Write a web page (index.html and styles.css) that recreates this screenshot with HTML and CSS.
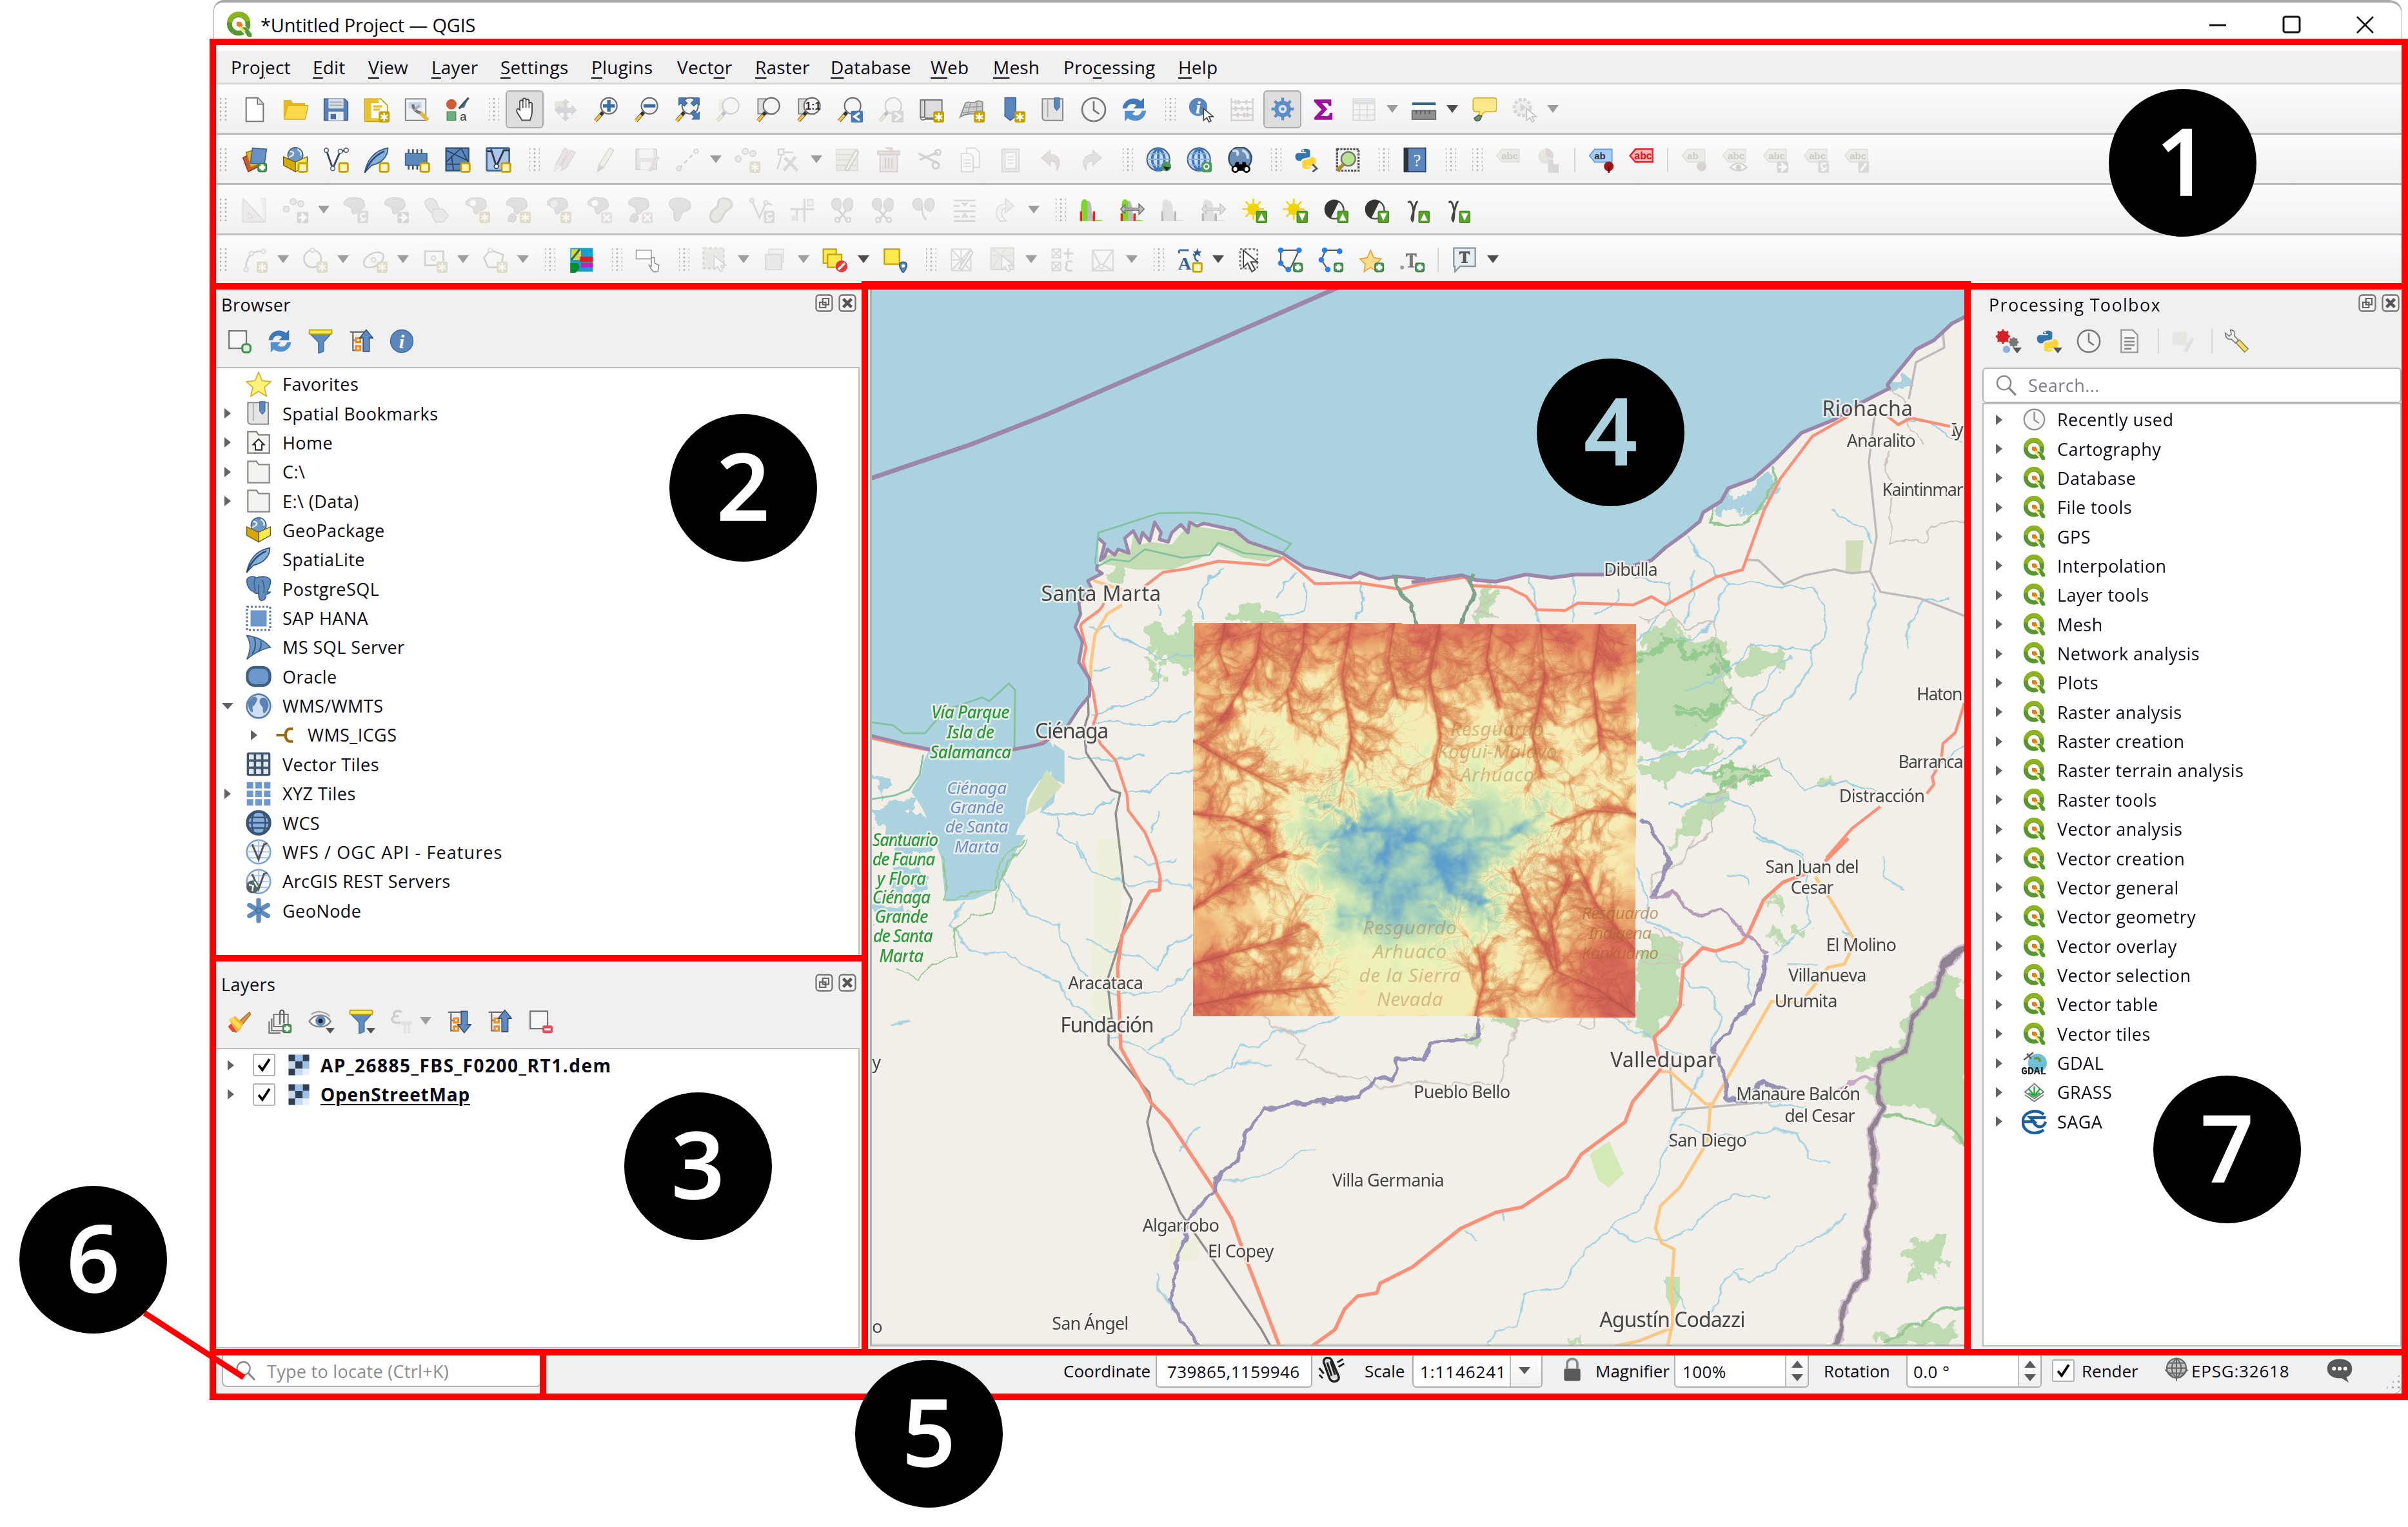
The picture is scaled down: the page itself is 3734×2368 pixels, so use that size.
FILE: index.html
```html
<!DOCTYPE html>
<html lang="en">
<head>
<meta charset="utf-8">
<title>*Untitled Project — QGIS</title>
<link rel="stylesheet" href="styles.css">
</head>
<body>
<svg class="sprite" aria-hidden="true">
<defs>
<!-- corner badges -->
<g id="b-star"><rect x="14" y="13.5" width="10" height="10.5" rx="1.6" fill="#c4a000"/><path d="M19 15v7.6M15.7 17l6.6 3.6M22.3 17l-6.6 3.6" stroke="#fff" stroke-width="1.5"/></g>
<g id="b-sq"><rect x="15" y="15" width="8" height="8" rx="1.2" fill="#fcf2b8" stroke="#c4a000" stroke-width="1.7"/></g>
<g id="b-plus"><rect x="15" y="15" width="8" height="8" rx="1.8" fill="#4e9a5a" stroke="#3d7d48"/><path d="M19 16.2v5.6M16.2 19h5.6" stroke="#fff" stroke-width="2.6"/></g>
<g id="b-x"><rect x="14" y="14" width="10" height="10" rx="1.5" fill="#e0a0a0"/><path d="M16 16l6 6M22 16l-6 6" stroke="#fff" stroke-width="1.8"/></g>
<g id="b-go"><rect x="13.5" y="13.5" width="10.5" height="10.5" rx="1.5" fill="#888"/><path d="M15 18.8h5M18.4 15.6l3.6 3.2-3.6 3.2z" stroke="#fff" stroke-width="1.8" fill="#fff"/></g>
<g id="b-rot"><rect x="14" y="12.5" width="10" height="11.5" rx="1.5" fill="#999"/><path d="M21.5 16c-3-2-6 1-4 3s3 2 4.500 0M16.500 21.500l4 0" stroke="#fff" stroke-width="1.6" fill="none"/></g>
<g id="b-up"><rect x="14" y="13" width="9.500" height="10.500" rx="1" fill="#5aa02c" stroke="#4a8a20"/><path d="M18.700 14.800l3.200 7h-6.400z" fill="#fff"/></g>
<g id="b-dn"><rect x="14" y="13" width="9.500" height="10.500" rx="1" fill="#5aa02c" stroke="#4a8a20"/><path d="M18.700 21.800l3.200-7h-6.400z" fill="#fff"/></g>
<g id="lens"><path d="M2 22.500l7-8" stroke="#333" stroke-width="3.400"/><path d="M1.800 22.600l5-5.600" stroke="#f5c242" stroke-width="2.600"/><circle cx="14.500" cy="8.500" r="7.500" fill="#f4f4f2" stroke="#6b6b6b" stroke-width="1.300"/></g>
<path id="blob" d="M2 4c3-5 9-4 14-3s6 8 2 10-4 1-5 3-3 2-4 0 1-3-2-5-7-1-5-5z" fill="#9fa79c" stroke="#84907f"/>
<path id="tagp" d="M1 11l5-6h16v12H6z"/>
<g id="ptr"><path d="M14 11l0 11 3-2.500 2 4 2-1-2-4h4z" fill="#fff" stroke="#444"/></g>
<!-- project and navigation -->
<symbol id="new" viewBox="0 0 24 24"><path d="M4 1h11l5 5.500V23H4z" fill="#fff" stroke="#777" stroke-width="1.200"/><path d="M14.500 1v6H20" fill="#ddd" stroke="#777"/></symbol>
<symbol id="open" viewBox="0 0 24 24"><path d="M1 3h7l2 3h11v4H5L1 20z" fill="#e8b923"/><path d="M5 8h19l-3 13H1.500z" fill="#fcd94b" stroke="#d8a91a" stroke-width=".8"/></symbol>
<symbol id="save" viewBox="0 0 24 24"><path d="M1 2h19l3 3v17H1z" fill="#5b80b2" stroke="#3e5f8a"/><path d="M5 2h14v9H5z" fill="#d9dde3"/><path d="M6 5h12M6 8h12" stroke="#9aa"/><path d="M5 14h14v8H5z" fill="#e8eef6"/><path d="M7 16h5v5H7z" fill="#4c6d99"/></symbol>
<symbol id="layout" viewBox="0 0 24 24"><path d="M1 2h15l6 6v15H1z" fill="#fff" stroke="#c4a000"/><path d="M1 2h6v21H1zM7 2h7v4H7zM7 20h7v3H7z" fill="#e6c232"/><path d="M9 9h8M9 12h6" stroke="#e6c232" stroke-width="2"/><use href="#b-star"/></symbol>
<symbol id="report" viewBox="0 0 24 24"><path d="M1 2h19v20H1z" fill="#eef2f7" stroke="#777"/><path d="M4 5h12v6H4z" fill="#c9d7e8"/><path d="M14 14l8 8" stroke="#e3bb3c" stroke-width="3.500"/><path d="M8 7c0 5 3 7 7 8" stroke="#777" stroke-width="2.600" fill="none"/><path d="M9 13l5-5" stroke="#aaa" stroke-width="2"/></symbol>
<symbol id="styles" viewBox="0 0 24 24"><circle cx="6" cy="7" r="4.800" fill="#cf5c36"/><path d="M22 1l-4 9-5 1z" fill="#4c77a8"/><path d="M22 1l-9 10" stroke="#456" stroke-width="2"/><rect x="2" y="14" width="8" height="8" fill="#6fae7f" stroke="#59936a"/><text x="14" y="22" font-size="11" font-family="Liberation Sans,sans-serif" fill="#333">a</text></symbol>
<symbol id="hand" viewBox="0 0 24 24"><path d="M7 13V5c0-2 3-2 3 0V3c0-2 3-2 3 0v1c0-2 3-2 3 0v3c0-2 3-1.500 3 0v8c0 3-1 5-2 8H9c-1-3-6-8-5-10s2-1 3 0z" fill="#fff" stroke="#444" stroke-width="1.200"/><path d="M10 5v6M13 4v7M16 6v5" stroke="#444"/></symbol>
<symbol id="pansel" viewBox="0 0 24 24"><path d="M2 4h9v9H2z" fill="#c4b870"/><path d="M12 2l4 4h-2.500v4h4V7.500l5 5-5 5V15h-4v4H16l-4 4-4-4h2.500v-4h-4v2.500l-5-5 5-5V10h4V6H8z" fill="#7b86a8"/></symbol>
<symbol id="zin" viewBox="0 0 24 24"><use href="#lens"/><path d="M14.500 3v11M9 8.500h11" stroke="#3a6ea5" stroke-width="3.200"/></symbol>
<symbol id="zout" viewBox="0 0 24 24"><use href="#lens"/><path d="M9 8.500h11" stroke="#3a6ea5" stroke-width="3.200"/></symbol>
<symbol id="zfull" viewBox="0 0 24 24"><use href="#lens"/><path d="M4 1h7l-2 2 3 3-3 3-3-3-2 2zM23 1h-7l2 2-3 3 3 3 3-3 2 2zM23 21h-7l2-2-3-4 3-3 3 4 2-2z" fill="#4a7ab5" stroke="#345d8c" stroke-width=".6"/></symbol>
<symbol id="zsel" viewBox="0 0 24 24"><path d="M3 2h13v12H3z" fill="#e0d9a0"/><use href="#lens"/></symbol>
<symbol id="zlay" viewBox="0 0 24 24"><path d="M2 2h15v14H2z" fill="#ddd" stroke="#777"/><use href="#lens"/></symbol>
<symbol id="znat" viewBox="0 0 24 24"><path d="M2 2h15v14H2z" fill="#ddd" stroke="#777"/><use href="#lens"/><text x="8.200" y="12" font-size="10" font-weight="700" font-family="Liberation Sans,sans-serif" fill="#222">1:1</text></symbol>
<symbol id="zlast" viewBox="0 0 24 24"><use href="#lens"/><rect x="13" y="13" width="11" height="11" rx="1" fill="#4a7ab5"/><path d="M21 15l-5 3.500 5 3.500" stroke="#fff" stroke-width="2" fill="none"/></symbol>
<symbol id="znext" viewBox="0 0 24 24"><use href="#lens"/><rect x="13" y="13" width="11" height="11" rx="1" fill="#889"/><path d="M16 15l5 3.500-5 3.500" stroke="#fff" stroke-width="2" fill="none"/></symbol>
<symbol id="map" viewBox="0 0 24 24"><path d="M2 3h4v16H2zM6 3h16v17H6" fill="#ddd" stroke="#777" stroke-width="1.200"/><path d="M2 19c0 3 3 3 4 2h15" fill="none" stroke="#777"/><use href="#b-star"/></symbol>
<symbol id="map3d" viewBox="0 0 24 24"><path d="M6 6c3-3 6 1 9-1s5-1 7 0v9c-4 0-6 2-9 2s-8 0-12 3z" fill="#ccc" stroke="#888"/><path d="M5 10l17-1M3 15l18-2M11 5l-3 12M17 5l-1 10" stroke="#999" stroke-width=".8"/><use href="#b-star"/></symbol>
<symbol id="bmnew" viewBox="0 0 24 24"><path d="M5 1h10v17l-5 4-5-4z" fill="#5b87bd" stroke="#3e679a"/><use href="#b-star"/></symbol>
<symbol id="bm" viewBox="0 0 24 24"><path d="M2 2h19v20H5c-2 0-3-1-3-3z" fill="#e4e4e4" stroke="#888" stroke-width="1.200"/><path d="M7 2v17" stroke="#aaa"/><path d="M13 1h5v9l-2.500 3L13 10z" fill="#5b87bd" stroke="#3e679a" stroke-width=".6"/></symbol>
<symbol id="clock" viewBox="0 0 24 24"><circle cx="12" cy="12" r="10.800" fill="#f4f4f2" stroke="#777" stroke-width="1.600"/><path d="M12 4v8.500l5 3.500" stroke="#777" stroke-width="1.600" fill="none"/></symbol>
<symbol id="refresh" viewBox="0 0 24 24"><path d="M1 11C2 2 12-1 18 4l3-3v10H11l3-3C10 5 6 7 5 11z" fill="#3f78bd"/><path d="M23 13C22 22 12 25 6 20l-3 3V13h10l-3 3c4 3 8 1 9-3z" fill="#5590cf"/></symbol>
<symbol id="info" viewBox="0 0 24 24"><circle cx="12" cy="12" r="11" fill="#5b87bd" stroke="#44709f"/><text x="12" y="19" text-anchor="middle" font-size="19" font-style="italic" font-weight="700" font-family="Liberation Serif,serif" fill="#fff">i</text></symbol>
<symbol id="ident" viewBox="0 0 24 24"><circle cx="9" cy="9.500" r="8.500" fill="#5b87bd"/><text x="9" y="15.500" text-anchor="middle" font-size="17" font-style="italic" font-weight="700" font-family="Liberation Serif,serif" fill="#fff">i</text><use href="#ptr"/></symbol>
<symbol id="abacus" viewBox="0 0 24 24"><path d="M2 1v22M22 1v22M2 5h20M2 11h20M2 17h20M2 22h20" stroke="#777" stroke-width="1.400"/><path d="M6 3v4M9 3v4M16 3v4M6 9v4M12 9v4M17 9v4M8 15v4M14 15v4M17 15v4" stroke="#a66" stroke-width="2"/></symbol>
<symbol id="gear" viewBox="0 0 24 24"><circle cx="12" cy="12" r="6" fill="none" stroke="#5f8dc8" stroke-width="4"/><path d="M12 1v22M1 12h22M4.200 4.200l15.600 15.600M19.800 4.200L4.200 19.800" stroke="#5f8dc8" stroke-width="2.800"/><circle cx="12" cy="12" r="4" fill="#dfe6f0"/><circle cx="12" cy="12" r="1.700" fill="#5f8dc8"/></symbol>
<symbol id="sigma" viewBox="0 0 24 24"><path d="M4 3h15v5h-1.500c-.5-2-1-2.500-4-2.500H9.500l5.500 6-6.500 7h6c3 0 3.500-1 4-3H20v5.500H4v-1.500L11 12 4 4.500z" fill="#a0109c" stroke="#a0109c"/></symbol>
<symbol id="table" viewBox="0 0 24 24"><path d="M2 2h20v20H2z" fill="#eee" stroke="#888"/><path d="M2 3h20v4H2z" fill="#8fa4c0"/><path d="M2 12h20M2 17h20M8 7v15M15 7v15" stroke="#999"/></symbol>
<symbol id="measure" viewBox="0 0 24 24"><path d="M1 6.500h22" stroke="#3b5f86" stroke-width="2.600"/><rect x="1" y="13" width="22" height="8" fill="#8f8f8f" stroke="#666"/><path d="M5 13v3M9 13v3M13 13v3M17 13v3" stroke="#555"/></symbol>
<symbol id="tip" viewBox="0 0 24 24"><path d="M5 1h16c2 0 3 1 3 3v7c0 2-1 3-3 3h-8l-6 6 1-6H5c-2 0-3-1-3-3V4c0-2 1-3 3-3z" fill="#fae98a" stroke="#d6b93a" stroke-width="1.200"/><path d="M3 20l4-3 3 1-2 4c-2 1-4 1-5-2z" fill="#5e9a57" stroke="#555"/></symbol>
<symbol id="gearptr" viewBox="0 0 24 24"><circle cx="10" cy="10" r="7.500" fill="#ddd" stroke="#888" stroke-width="3" stroke-dasharray="3 1.500"/><path d="M8 6l6 4-6 4z" fill="#888"/><use href="#ptr"/></symbol>
<!-- data sources and editing -->
<symbol id="dsm" viewBox="0 0 24 24"><path d="M1 10l8-4 5 13-8 4z" fill="#c45c3a" stroke="#94401f"/><path d="M4 5l10-3 3 14-9 3z" fill="#e6b422" stroke="#a87e10"/><path d="M10 1l13 1-2 14-13-1z" fill="#6591c4" stroke="#3d6899"/><use href="#b-plus"/></symbol>
<symbol id="gpkg" viewBox="0 0 24 24"><circle cx="12" cy="7.500" r="7" fill="#6f97c4" stroke="#3e5f86"/><path d="M7 4c2 0 4 1 3 3s-3 1-4 3M14 2c2 1 4 3 3 6" stroke="#dce8f5" stroke-width="1.500" fill="none"/><path d="M1 9l11 5v9L1 17z" fill="#d4a90e" stroke="#6e5a0c" stroke-width=".8"/><path d="M23 9l-11 5v9l11-6z" fill="#fbe94f" stroke="#6e5a0c" stroke-width=".8"/></symbol>
<symbol id="gpkgn" viewBox="0 0 24 24"><use href="#gpkg" width="24" height="24"/><use href="#b-sq"/></symbol>
<symbol id="shp" viewBox="0 0 24 24"><path d="M3 3l6 17L16 4l6 -1" stroke="#345" stroke-width="1.700" fill="none"/><g fill="#fff" stroke="#567"><circle cx="3" cy="3" r="2"/><circle cx="9" cy="20" r="2"/><circle cx="16" cy="4" r="2"/><circle cx="21.500" cy="3" r="2"/></g><use href="#b-sq"/></symbol>
<symbol id="feather" viewBox="0 0 24 24"><path d="M1 23.500C3 12 10 3 22.500 1c0 7-5 14-15 16z" fill="#86aedb" stroke="#2f5a88"/><path d="M1 24C4 16 10 8 19 4" stroke="#2c4a6e" stroke-width="1.500" fill="none"/></symbol>
<symbol id="feathern" viewBox="0 0 24 24"><use href="#feather" width="24" height="24"/><use href="#b-sq"/></symbol>
<symbol id="mem" viewBox="0 0 24 24"><rect x="1" y="6" width="20" height="11" fill="#5b87bd" stroke="#3e679a"/><path d="M4 2v4M8 2v4M12 2v4M16 2v4M4 17v4M8 17v4M12 17v4" stroke="#44556a" stroke-width="1.600"/><use href="#b-sq"/></symbol>
<symbol id="meshn" viewBox="0 0 24 24"><rect x="1" y="1" width="21" height="21" fill="#5b87bd" stroke="#2f4f76" stroke-width="1.400"/><path d="M1 14l14-13M1 3l21 10M8 22l-2-14M1 16h21M15 1l7 14" stroke="#24415f" fill="none"/><use href="#b-sq"/></symbol>
<symbol id="vtn" viewBox="0 0 24 24"><rect x="1" y="1" width="21" height="21" rx="1" fill="#a9c6e8" stroke="#3e679a" stroke-width="1.600"/><path d="M5 2l5 16L17 3h5M1 4h5" stroke="#334" stroke-width="1.700" fill="none"/><circle cx="10" cy="18" r="2" fill="#fff" stroke="#345"/><use href="#b-sq"/></symbol>
<symbol id="pens" viewBox="0 0 24 24"><path d="M2 22l1-6L11 1l4 2-8 15zM8 22l1-6 8-13 4 2-8 14z" fill="#dba8b8" stroke="#a88"/><path d="M2 22l1-6 4 2z" fill="#ddc"/></symbol>
<symbol id="pen" viewBox="0 0 24 24"><path d="M4 23l1.500-7L15 1l4 2-9.500 16z" fill="#e8dfa8" stroke="#888"/><path d="M4 23l1.500-7 4 3z" fill="#888"/></symbol>
<symbol id="savee" viewBox="0 0 24 24"><path d="M2 2h19v19H2z" fill="#bbb" stroke="#777"/><path d="M5 2h13v8H5zM6 14h10v7H6z" fill="#eee"/><path d="M13 22l8-14 3 2-8 13z" fill="#d99"/></symbol>
<symbol id="line" viewBox="0 0 24 24"><path d="M4 20L20 4" stroke="#777" stroke-dasharray="4 3" stroke-width="1.500"/><circle cx="4" cy="20" r="2.200" fill="#ccc" stroke="#888"/><circle cx="20" cy="4" r="2.200" fill="#ccc" stroke="#888"/></symbol>
<symbol id="pts" viewBox="0 0 24 24"><g fill="#ccc" stroke="#888" stroke-width="1.300"><circle cx="10" cy="4" r="2.700"/><circle cx="3.500" cy="11" r="2.700"/><circle cx="17" cy="6" r="2.700"/></g><use href="#b-star"/></symbol>
<symbol id="ptsm" viewBox="0 0 24 24"><g fill="#ccc" stroke="#888" stroke-width="1.300"><circle cx="10" cy="4" r="2.700"/><circle cx="3.500" cy="11" r="2.700"/><circle cx="17" cy="6" r="2.700"/></g><use href="#b-go"/></symbol>
<symbol id="vtx" viewBox="0 0 24 24"><path d="M3 2h5v5H3zM8 5h9M6 7l-4 14" stroke="#888" stroke-width="1.500" fill="none"/><path d="M8 22L19 9M9 10l12 12" stroke="#998" stroke-width="3"/></symbol>
<symbol id="multi" viewBox="0 0 24 24"><path d="M1 2h20v20H1z" fill="#d6d2b0" stroke="#aaa"/><path d="M1 7h20M1 12h20M1 17h20" stroke="#998"/><path d="M9 21L19 3l3 2-10 17z" fill="#ddc" stroke="#866"/></symbol>
<symbol id="trash" viewBox="0 0 24 24"><path d="M4 7h16v16H4z" fill="#e8b8b8" stroke="#a66"/><path d="M2 4h20v3H2zM9 1h6v3M9 10v10M12 10v10M15 10v10" fill="#d99" stroke="#a66" stroke-width="1.300"/></symbol>
<symbol id="cut" viewBox="0 0 24 24"><path d="M2 6l18 9M3 12l17-7" stroke="#777" stroke-width="2"/><circle cx="20" cy="5" r="2.500" fill="none" stroke="#777" stroke-width="1.800"/><circle cx="18" cy="17" r="3" fill="none" stroke="#777" stroke-width="1.800"/></symbol>
<symbol id="copy" viewBox="0 0 24 24"><path d="M9 1h8l4 4v14H9z" fill="#fff" stroke="#888"/><path d="M4 6h8l3 3v14H4z" fill="#fff" stroke="#888"/><path d="M6 12h7M6 15h7M6 18h7" stroke="#999"/></symbol>
<symbol id="paste" viewBox="0 0 24 24"><path d="M4 2h16v21H4z" fill="#ccb" stroke="#887"/><path d="M7 5h10v15H7z" fill="#fff" stroke="#999"/><path d="M9 9h6M9 12h6M9 15h6" stroke="#999"/></symbol>
<symbol id="undo" viewBox="0 0 24 24"><path d="M3 10l8-7v4c9 0 11 8 6 15 1-6-1-9-6-9v4z" fill="#b98" stroke="#a87"/></symbol>
<symbol id="redo" viewBox="0 0 24 24"><path d="M21 10l-8-7v4C4 7 2 15 7 22c-1-6 1-9 6-9v4z" fill="#9ab09a" stroke="#899"/></symbol>
<symbol id="globe" viewBox="0 0 24 24"><circle cx="12" cy="12" r="11" fill="#c9dcf0" stroke="#44668c" stroke-width="1.400"/><path d="M12 1v22M12 1C4 7 4 17 12 23M12 1c8 6 8 16 0 22" stroke="#3f78bd" stroke-width="2.400" fill="none"/><path d="M1 12h22M3 6.500h18M3 17.500h18" stroke="#8fb0d6" fill="none"/></symbol>
<symbol id="meta1" viewBox="0 0 24 24"><use href="#globe" width="23" height="23"/><circle cx="19" cy="18" r="4.500" fill="#4e9a5a"/><path d="M16 18l3 4 4-3z" fill="#222"/></symbol>
<symbol id="meta2" viewBox="0 0 24 24"><use href="#globe" width="23" height="23"/><rect x="14" y="14" width="9.500" height="9.500" rx="2" fill="#4e9a5a"/><circle cx="18.500" cy="18.200" r="2.200" fill="none" stroke="#fff" stroke-width="1.400"/></symbol>
<symbol id="world" viewBox="0 0 24 24"><circle cx="12" cy="12" r="11" fill="#cddff2" stroke="#5b80ab" stroke-width="1.600"/><path d="M6 4c4-2 6 1 4 4s-1 3-3 4 1 4-1 6c-3-2-5-8-3-11zM14 5c3-2 6 0 7 4s-1 8-4 10c-2-3 0-5-2-7s-3-5-1-7z" fill="#5b84b5"/></symbol>
<symbol id="binoc" viewBox="0 0 24 24"><circle cx="12" cy="10.500" r="10.500" fill="#6c8fb8" stroke="#33506f" stroke-width="1.500"/><path d="M5 4c4-2 6 1 4 4M14 3c3 1 6 4 5 8" stroke="#cfdded" stroke-width="2.400" fill="none"/><path d="M5 22l3-8h3v2h3v-2h3l3 8z" fill="#000"/><circle cx="7.500" cy="20.500" r="2.700" fill="#fff" stroke="#000" stroke-width="1.700"/><circle cx="18" cy="20.500" r="2.700" fill="#fff" stroke="#000" stroke-width="1.700"/></symbol>
<symbol id="python" viewBox="0 0 24 24"><path d="M7 4c0-3 9-3 9 0v5c0 3-8 1-9 5H4c-4-1-4-8 0-8h8V5H7z" fill="#3474a8"/><path d="M17 20c0 3-9 3-9 0v-5c0-3 8-1 9-5h2c4 1 4 8 0 9h-7v1z" fill="#ffd43b"/><circle cx="9" cy="3.600" r="1" fill="#fff"/></symbol>
<symbol id="pyc" viewBox="0 0 24 24"><use href="#python" width="22" height="22"/><path d="M17 16l4 4-4 3" stroke="#555" stroke-width="1.700" fill="none"/></symbol>
<symbol id="osmsearch" viewBox="0 0 24 24"><path d="M2 2h20v20H2z" fill="#f4f4f0" stroke="#555" stroke-width="2" stroke-dasharray="2 1"/><circle cx="12.500" cy="11" r="6.500" fill="#b9e38c" stroke="#777" stroke-width="1.500"/><path d="M2 22l6-6" stroke="#b58a2a" stroke-width="3.400"/></symbol>
<symbol id="help" viewBox="0 0 24 24"><path d="M2 1h20v22H2z" fill="#5b87bd" stroke="#2f3f52"/><path d="M2 1h4v22H2z" fill="#27323f"/><text x="14" y="18" text-anchor="middle" font-size="16" font-family="Liberation Serif,serif" fill="#fff">?</text></symbol>
<symbol id="tag" viewBox="0 0 24 24"><use href="#tagp" y="-3" fill="#cfcaa6" stroke="#a9a58a"/><text x="5.500" y="11.500" font-size="9" font-weight="700" font-family="Liberation Sans,sans-serif" fill="#555">abc</text></symbol>
<symbol id="diag" viewBox="0 0 24 24"><circle cx="9" cy="8.500" r="7" fill="#aac0a0"/><path d="M9 8.500V1a7.500 7.500 0 0 1 7 9z" fill="#b77"/><path d="M11 12h5v12h-5zM16 16h5v8h-5z" fill="#a88"/></symbol>
<symbol id="tagpin" viewBox="0 0 24 24"><use href="#tagp" y="-3" fill="#a9cdf6" stroke="#5e97dd"/><text x="5.500" y="11.500" font-size="9" font-weight="700" font-family="Liberation Sans,sans-serif" fill="#333">ab</text><circle cx="19" cy="18" r="4.500" fill="#a31515"/><path d="M19 18v6" stroke="#700" stroke-width="1.500"/></symbol>
<symbol id="tagred" viewBox="0 0 24 24"><use href="#tagp" y="-3" fill="#fbb" stroke="#e22" stroke-width="1.500"/><text x="5" y="11.500" font-size="9.500" font-weight="700" font-family="Liberation Sans,sans-serif" fill="#e01010">abc</text></symbol>
<symbol id="tagpin2" viewBox="0 0 24 24"><use href="#tagp" y="-3" fill="#d8d4ac" stroke="#a9a58a"/><text x="5.500" y="11.500" font-size="9" font-weight="700" font-family="Liberation Sans,sans-serif" fill="#555">ab</text><circle cx="19" cy="18" r="4.500" fill="#a77"/></symbol>
<symbol id="tageye" viewBox="0 0 24 24"><use href="#tagp" y="-3" fill="#d8d4ac" stroke="#a9a58a"/><text x="5.500" y="11.500" font-size="9" font-weight="700" font-family="Liberation Sans,sans-serif" fill="#555">abc</text><path d="M8 19c4-5 11-5 15 0-4 4-11 4-15 0z" fill="#fff" stroke="#777" stroke-width="1.400"/><circle cx="15.500" cy="19" r="2.500" fill="#777"/></symbol>
<symbol id="taggo" viewBox="0 0 24 24"><use href="#tagp" y="-3" fill="#d8d4ac" stroke="#a9a58a"/><text x="5.500" y="11.500" font-size="9" font-weight="700" font-family="Liberation Sans,sans-serif" fill="#555">abc</text><use href="#b-go"/></symbol>
<symbol id="tagrot" viewBox="0 0 24 24"><use href="#tagp" y="-3" fill="#d8d4ac" stroke="#a9a58a"/><text x="5.500" y="11.500" font-size="9" font-weight="700" font-family="Liberation Sans,sans-serif" fill="#555">abc</text><use href="#b-rot"/></symbol>
<symbol id="taged" viewBox="0 0 24 24"><use href="#tagp" y="-3" fill="#d8d4ac" stroke="#a9a58a"/><text x="5.500" y="11.500" font-size="9" font-weight="700" font-family="Liberation Sans,sans-serif" fill="#555">abc</text><rect x="13.500" y="13" width="10" height="11" rx="1.500" fill="#998"/><path d="M16 22l5-7" stroke="#fff" stroke-width="2"/></symbol>
<!-- advanced digitizing -->
<symbol id="tri" viewBox="0 0 24 24"><path d="M1 1v22h21z" fill="#e8ccc8" stroke="#a99"/><path d="M6 14v5h4z" fill="#fff" stroke="#a99"/><path d="M17 1h5v22" fill="#e0dccb" stroke="#bbb"/></symbol>
<symbol id="a1" viewBox="0 0 24 24"><use href="#blob"/><use href="#b-rot"/></symbol>
<symbol id="a2" viewBox="0 0 24 24"><use href="#blob"/><use href="#b-go"/></symbol>
<symbol id="a3" viewBox="0 0 24 24"><path d="M2 3c3-3 8-3 10 2s3 6 0 9-6 0-8-3-4-6-2-8z" fill="#b4bcb2" stroke="#84907f"/><path d="M9 11h9l5 6-5 6h-7l-3-6z" fill="#c8cdd6" stroke="#8a93a3"/></symbol>
<symbol id="a4" viewBox="0 0 24 24"><use href="#blob"/><circle cx="8" cy="5.500" r="3" fill="#fff"/><use href="#b-star"/></symbol>
<symbol id="a5" viewBox="0 0 24 24"><use href="#blob"/><path d="M3 22c0-6 4-8 6-6s2 5-1 7z" fill="#9fa79c" stroke="#84907f"/><use href="#b-star"/></symbol>
<symbol id="a6" viewBox="0 0 24 24"><use href="#blob"/><circle cx="8" cy="6" r="4" fill="#cfd4cc" stroke="#999"/><use href="#b-star"/></symbol>
<symbol id="a7" viewBox="0 0 24 24"><use href="#blob"/><circle cx="8" cy="5.500" r="3" fill="#fff"/><use href="#b-x"/></symbol>
<symbol id="a8" viewBox="0 0 24 24"><use href="#blob"/><path d="M3 22c0-6 4-8 6-6s2 5-1 7z" fill="#9fa79c" stroke="#84907f"/><use href="#b-x"/></symbol>
<symbol id="a9" viewBox="0 0 24 24"><path d="M2 4c3-5 14-4 18 0s0 9-4 9-3 9-7 9-3-7-3-9-6-4-4-9z" fill="#a6aea0" stroke="#84907f"/></symbol>
<symbol id="a10" viewBox="0 0 24 24"><path d="M11 2c4-2 10-1 11 4s-5 5-7 9-3 8-8 8-6-5-4-9 5-3 6-6 0-5 2-6z" fill="#c9c5a8" stroke="#84907f" stroke-width="2"/></symbol>
<symbol id="a11" viewBox="0 0 24 24"><path d="M3 3l7 16L16 5l6 2" stroke="#888" stroke-width="1.600" fill="none"/><circle cx="3" cy="3" r="2" fill="#ccc" stroke="#888"/><circle cx="16" cy="5" r="2" fill="#ccc" stroke="#888"/><use href="#b-rot"/></symbol>
<symbol id="a12" viewBox="0 0 24 24"><path d="M1 11h22M14 1v22M7 12v10" stroke="#998" stroke-width="2"/><rect x="17" y="2" width="5" height="6" fill="#ddc" stroke="#998"/><rect x="2" y="17" width="5" height="5" fill="#dbb"/></symbol>
<symbol id="a13" viewBox="0 0 24 24"><path d="M2 4c2-4 7-4 8 0s0 8-3 8-7-4-5-8zM13 4c2-4 7-4 8 0s-1 9-4 9-6-5-4-9z" fill="#9fa79c" stroke="#84907f"/><path d="M8 12l8 9M15 12l-7 9" stroke="#877" stroke-width="1.600"/><circle cx="7" cy="21" r="2.200" fill="none" stroke="#a88" stroke-width="1.500"/><circle cx="17" cy="21" r="2.200" fill="none" stroke="#a88" stroke-width="1.500"/></symbol>
<symbol id="a14" viewBox="0 0 24 24"><path d="M2 4c2-4 7-4 8 0s0 8-3 8-7-4-5-8zM13 4c2-4 7-4 8 0s-1 9-4 9-6-5-4-9z" fill="#9fa79c" stroke="#84907f"/><path d="M10 9c0 6 1 9 4 12" stroke="#877" stroke-width="1.600" fill="none"/></symbol>
<symbol id="a15" viewBox="0 0 24 24"><path d="M2 3h20M2 8h5M17 8h5M2 13h20M2 18h5M17 18h5M2 22h20" stroke="#888" stroke-width="1.600"/><path d="M9 5l3 3 3-3M9 19l3-4 3 4" fill="#aaa" stroke="#888"/></symbol>
<symbol id="a16" viewBox="0 0 24 24"><path d="M12 1l8 7-8 6z" fill="#ccc" stroke="#999"/><path d="M12 6C3 7 1 16 7 22h6C7 17 7 11 12 10" fill="#eee" stroke="#999"/></symbol>
<!-- raster stretch -->
<symbol id="hist" viewBox="0 0 24 24"><path d="M2 22V8c0-5 2-7 4-6s4 5 4 10l5 9h5l3 1z" fill="#7ed62d"/><path d="M8 22V3c3 0 4 5 4 11l3 8z" fill="#bbb"/><path d="M2 22v-9M14 22v-9" stroke="#e22" stroke-width="2"/></symbol>
<symbol id="histm" viewBox="0 0 24 24"><path d="M2 22V8c0-5 2-7 4-6s4 5 4 10l5 9h5l3 1z" fill="#7ed62d"/><path d="M8 22V3c3 0 4 5 4 11l3 8z" fill="#bbb"/><path d="M2 22v-7M14 22v-7" stroke="#e22" stroke-width="2"/><path d="M1 11l4-4v3h13V6l5 5-5 5v-4H5v3z" fill="#bbb" stroke="#666" stroke-width=".8"/></symbol>
<symbol id="sunu" viewBox="0 0 24 24"><circle cx="11" cy="11" r="5.500" fill="#f2d500"/><path d="M11 1v20M1 11h20M4 4l14 14M18 4L4 18" stroke="#f2d500" stroke-width="1.500"/><use href="#b-up"/></symbol>
<symbol id="sund" viewBox="0 0 24 24"><circle cx="11" cy="11" r="5.500" fill="#f2d500"/><path d="M11 1v20M1 11h20M4 4l14 14M18 4L4 18" stroke="#f2d500" stroke-width="1.500"/><use href="#b-dn"/></symbol>
<symbol id="conu" viewBox="0 0 24 24"><circle cx="11" cy="11.500" r="8.500" fill="#eee" stroke="#555" stroke-width="1.500"/><path d="M14 4L7 18A7.500 7.500 0 0 1 14 4z" fill="#333" stroke="#333" stroke-width="2"/><use href="#b-up"/></symbol>
<symbol id="cond" viewBox="0 0 24 24"><circle cx="11" cy="11.500" r="8.500" fill="#eee" stroke="#555" stroke-width="1.500"/><path d="M14 4L7 18A7.500 7.500 0 0 1 14 4z" fill="#333" stroke="#333" stroke-width="2"/><use href="#b-dn"/></symbol>
<symbol id="gamu" viewBox="0 0 24 24"><path d="M4 5c2-3 4 1 5 8 0 4 0 7-1 9-2-2 0-6 1-9 2-6 2-9 4-9" stroke="#444" stroke-width="1.800" fill="none"/><use href="#b-up"/></symbol>
<symbol id="gamd" viewBox="0 0 24 24"><path d="M4 5c2-3 4 1 5 8 0 4 0 7-1 9-2-2 0-6 1-9 2-6 2-9 4-9" stroke="#444" stroke-width="1.800" fill="none"/><use href="#b-dn"/></symbol>
<!-- shapes, selection, mesh and annotation -->
<symbol id="arc" viewBox="0 0 24 24"><path d="M4 21C3 10 9 3 20 4" stroke="#777" stroke-width="1.600" fill="none"/><circle cx="4" cy="21" r="2" fill="#eee" stroke="#888"/><circle cx="9" cy="6" r="2" fill="#eee" stroke="#888"/><circle cx="20" cy="4" r="2" fill="#eee" stroke="#888"/><use href="#b-star"/></symbol>
<symbol id="circ" viewBox="0 0 24 24"><circle cx="10" cy="11" r="8" stroke="#777" stroke-width="1.600" fill="none"/><circle cx="10" cy="3" r="2" fill="#eee" stroke="#888"/><use href="#b-star"/></symbol>
<symbol id="ell" viewBox="0 0 24 24"><ellipse cx="11" cy="12" rx="10" ry="6" transform="rotate(-30 11 12)" stroke="#777" stroke-width="1.600" fill="none"/><circle cx="11" cy="12" r="2" fill="#eee" stroke="#888"/><use href="#b-star"/></symbol>
<symbol id="rct" viewBox="0 0 24 24"><rect x="3" y="4" width="17" height="13" stroke="#777" stroke-width="1.600" fill="none"/><circle cx="11" cy="10.500" r="2" fill="#eee" stroke="#888"/><use href="#b-star"/></symbol>
<symbol id="poly" viewBox="0 0 24 24"><path d="M8 3l12 4-2 12H6l-4-9z" stroke="#777" stroke-width="1.600" fill="none"/><circle cx="8" cy="3" r="2" fill="#eee" stroke="#888"/><use href="#b-star"/></symbol>
<symbol id="georef" viewBox="0 0 24 24"><rect x="2" y="1" width="21" height="22" fill="#159fd0"/><path d="M3 2h9v10H3z" fill="#e3cf4a"/><path d="M3 12l8-10" stroke="#274" stroke-width="2"/><path d="M11 9h12v5H11z" fill="#d22"/><path d="M12 15h11v4H12z" fill="#c020c0"/><path d="M2 15h7l2 4-4 5H2z" fill="#0a8a2a"/></symbol>
<symbol id="selrect" viewBox="0 0 24 24"><path d="M1 3h14v8H1z" fill="#fff" stroke="#888"/><path d="M15 10v8l-2-1c1 3 2 4 4 6h4l1-6-4-2v-5z" fill="#fff" stroke="#777"/></symbol>
<symbol id="selfeat" viewBox="0 0 24 24"><rect x="1" y="1" width="19" height="19" fill="#c9c9a8" stroke="#888" stroke-dasharray="3 2" stroke-width="1.500"/><path d="M11 8v13l3-3 3 5 2-1-2-5h5z" fill="#fff" stroke="#888"/></symbol>
<symbol id="selval" viewBox="0 0 24 24"><path d="M6 2h14v12H6z" fill="#ddd" stroke="#999"/><path d="M3 7h15v14H3z" fill="#c9c9b8" stroke="#888"/></symbol>
<symbol id="desel" viewBox="0 0 24 24"><path d="M1 2h12v13H1z" fill="#fce94f" stroke="#c4a000" stroke-width="1.300"/><path d="M5 7h13v12H5z" fill="#fce94f" stroke="#c4a000" stroke-width="1.300"/><circle cx="18" cy="18" r="5.500" fill="#e23b3b"/><path d="M15 21l6-6" stroke="#fff" stroke-width="2"/></symbol>
<symbol id="selloc" viewBox="0 0 24 24"><path d="M2 2h14v14H2z" fill="#fce94f" stroke="#c4a000" stroke-width="1.300"/><path d="M19.500 24c-5-6-4-10 0-10s5 4 0 10z" fill="#5d84ac" stroke="#3d5f80"/><circle cx="19.500" cy="17.500" r="1.500" fill="#fff"/></symbol>
<symbol id="m1" viewBox="0 0 24 24"><path d="M2 2h18v20H2zM2 12h18M2 22L20 2M11 2v20M2 2l18 20" stroke="#999" fill="none" stroke-width="1.300"/><path d="M9 20L20 3l2 2-10 16z" fill="#eee" stroke="#866"/></symbol>
<symbol id="m2" viewBox="0 0 24 24"><path d="M1 1h21v20H1z" fill="#cfd0b8" stroke="#999" stroke-width="1.300"/><path d="M1 8h21M1 21L15 1M1 1l20 14" stroke="#aaa"/><path d="M11 8v13l3-3 3 5 2-1-2-5h5z" fill="#fff" stroke="#888"/></symbol>
<symbol id="m3" viewBox="0 0 24 24"><path d="M2 2h8v8H2zM2 2l8 8M10 2l-8 8M2 14h8v8H2zM2 14l8 8M10 14l-8 8" stroke="#888" fill="none"/><path d="M17 1v10M13 6h9M21 14c-4-2-7 0-5 3-3 2-1 6 5 5" stroke="#888" stroke-width="1.700" fill="none"/></symbol>
<symbol id="m4" viewBox="0 0 24 24"><path d="M2 3h19v19H2zM2 3l8 16L21 3M2 22l8-6 11 6" stroke="#999" fill="none" stroke-width="1.500"/><circle cx="10" cy="18" r="2" fill="#eee" stroke="#999"/></symbol>
<symbol id="ann" viewBox="0 0 24 24"><path d="M2 3h9M2 3v3M15 7c3 0 0 6 5 6" stroke="#44709f" stroke-width="1.800" fill="none"/><text x="1" y="21" font-size="17" font-weight="700" font-family="Liberation Serif,serif" fill="#2f5f96">A</text><path d="M19 1l1 3h3l-2 2 1 3-3-2-3 2 1-3-2-2h3z" fill="#2f5f96"/><use href="#b-sq"/></symbol>
<symbol id="annsel" viewBox="0 0 24 24"><rect x="3" y="2" width="16" height="18" fill="none" stroke="#777" stroke-dasharray="2 2" stroke-width="1.600"/><path d="M6 3v16l4-4 4 8 3-2-4-7h6z" fill="#fff" stroke="#444" stroke-width="1.200"/></symbol>
<symbol id="npoly" viewBox="0 0 24 24"><path d="M3 3h17l-7 15-3 4L3 15z" stroke="#555" stroke-width="1.300" fill="none"/><g fill="#2a7ff0"><circle cx="3" cy="3" r="2.600"/><circle cx="20" cy="3" r="2.600"/><circle cx="3" cy="15" r="2.600"/><circle cx="10" cy="21" r="2.600"/></g><use href="#b-plus"/></symbol>
<symbol id="nline" viewBox="0 0 24 24"><path d="M19 3H7l-4 9 6 9" stroke="#555" stroke-width="1.300" fill="none"/><g fill="#2a7ff0"><circle cx="6" cy="3" r="2.600"/><circle cx="20" cy="4" r="2.600"/><circle cx="3" cy="12" r="2.600"/><circle cx="9" cy="21" r="2.600"/></g><use href="#b-plus"/></symbol>
<symbol id="nstar" viewBox="0 0 24 24"><path d="M11 3l3 7 7 1-5 5 1 7-6-4-6 4 1-7-5-5 7-1z" fill="#f9dd8e" stroke="#e0a63a"/><use href="#b-plus"/></symbol>
<symbol id="ntext" viewBox="0 0 24 24"><path d="M6 6h10v3h-1c0-1-1-1.500-2.500-1.500V18h1.500v1H8v-1h1.500V7.500C8 7.500 7 8 7 9H6z" fill="#777"/><circle cx="2.500" cy="19" r="1.800" fill="#999"/><use href="#b-plus"/></symbol>
<symbol id="tbal" viewBox="0 0 24 24"><path d="M2 1h20v17H8l-5 5V18H2z" fill="#e6eef3" stroke="#8a98a3" stroke-width="1.400"/><path d="M7 4h10v3h-1c0-1-1-1.500-2.500-1.500V14H15v1H9v-1h1.500V5.500C9 5.500 8 6 8 7H7z" fill="#555"/></symbol>
<!-- tree and panel icons -->
<symbol id="qgis" viewBox="0 0 24 24"><circle cx="11.500" cy="11.500" r="8.600" fill="none" stroke="#589632" stroke-width="4.600"/><path d="M3 10a8.600 8.600 0 0 1 17-1" fill="none" stroke="#8db41f" stroke-width="4.600"/><path d="M12 12h4.500l7 8v3.500h-4L12 16z" fill="#fff"/><path d="M14.500 14.500h4l5 6v3h-3.500z" fill="#589632"/><path d="M9.500 9.500h4l2 3.500-2 2-4-2z" fill="#ee7913"/><path d="M13 13l5 5-1.500 1.500-4-4z" fill="#f0e64a"/></symbol>
<symbol id="star" viewBox="0 0 24 24"><path d="M12 .8l3.400 7.900 8.100.8-6.100 5.300 1.900 8.200L12 18.600 4.700 23l1.900-8.200L.5 9.500l8.100-.8z" fill="#fdf37a" stroke="#d2b52c" stroke-width="1.100"/></symbol>
<symbol id="home" viewBox="0 0 24 24"><path d="M2 2h8l2 3h10v17H2z" fill="#f3f3f1" stroke="#7d7d7a" stroke-width="1.300"/><path d="M7 14l5-5 5 5h-2v5H9v-5z" fill="#fff" stroke="#333" stroke-width="1.300"/></symbol>
<symbol id="fold" viewBox="0 0 24 24"><path d="M2 2h8l2 3h10v17H2z" fill="#f3f3f1" stroke="#8a8a87" stroke-width="1.300"/></symbol>
<symbol id="pg" viewBox="0 0 24 24"><path d="M1 4c1-4 7-4 9-2 4-2 11-2 13 2 1 4-2 8-3 11h3c-1 2-3 2-4 2 0 3-1 6-4 6s-3-4-3-7c-3 1-4 0-5-2-2 1-6-4-6-10z" fill="#5f8bbf" stroke="#3f5f82"/><path d="M9 2C7 6 8 10 9 14M15 4c3 3 2 9 2 12M12 8v8" stroke="#3f5f82" fill="none"/></symbol>
<symbol id="hana" viewBox="0 0 24 24"><rect x="4.500" y="4.500" width="15" height="15" fill="#6c98cb"/><rect x="1.200" y="1.200" width="21.600" height="21.600" fill="none" stroke="#5c7590" stroke-width="1.800" stroke-dasharray="1.800 1.800"/></symbol>
<symbol id="mssql" viewBox="0 0 24 24"><path d="M1 1c9 1 17 5 22 11-6 1-15 5-22 11C5 14 5 8 1 1z" fill="#6c98cb" stroke="#44617f"/><path d="M8 3c2 6 1 11-2 15M14 6c1 4 0 7-2 10" stroke="#33506f" fill="none"/></symbol>
<symbol id="ora" viewBox="0 0 24 24"><rect x="1.500" y="3.500" width="21" height="17" rx="7" fill="#6c98cb" stroke="#3f5f82" stroke-width="2.600"/></symbol>
<symbol id="conn" viewBox="0 0 24 24"><path d="M3 12h9M20 5.500h-3c-6 0-6 13 0 13h3" stroke="#a0640f" stroke-width="2.800" fill="none"/></symbol>
<symbol id="vt" viewBox="0 0 24 24"><rect x="1" y="1" width="22" height="22" rx="2" fill="#3f566e"/><path d="M3 3h4.500v4.500H3zM9.700 3h4.500v4.500H9.700zM16.500 3H21v4.500h-4.500zM3 9.700h4.500v4.500H3zM9.700 9.700h4.500v4.500H9.700zM16.500 9.700H21v4.500h-4.500zM3 16.500h4.500V21H3zM9.700 16.500h4.500V21H9.700zM16.500 16.500H21V21h-4.500z" fill="#e2e9f0"/></symbol>
<symbol id="xyz" viewBox="0 0 24 24"><path d="M1 1h6v6H1zM9 1h6v6H9zM17 1h6v6h-6zM1 9h6v6H1zM9 9h6v6H9zM17 9h6v6h-6zM1 17h6v6H1zM9 17h6v6H9zM17 17h6v6h-6z" fill="#6c98cb"/></symbol>
<symbol id="wcs" viewBox="0 0 24 24"><circle cx="12" cy="12" r="10.500" fill="#86aede" stroke="#3a5674" stroke-width="2.600"/><path d="M1 12h22M3 7h18M3 17h18M8 2C5 8 5 16 8 22M16 2c3 6 3 14 0 20" stroke="#3a5674" stroke-width="1.500" fill="none"/></symbol>
<symbol id="wfs" viewBox="0 0 24 24"><circle cx="12" cy="12" r="11" fill="#f2f7fc" stroke="#7ba0cc" stroke-width="1.500"/><path d="M12 1v22M1 12h22M3 6.500h18M3 17.500h18" stroke="#a9c3e2"/><path d="M6 5l6 14 5-14 3-1" stroke="#555" stroke-width="1.800" fill="none"/></symbol>
<symbol id="arc2" viewBox="0 0 24 24"><circle cx="12" cy="12" r="11" fill="#f2f7fc" stroke="#7ba0cc" stroke-width="1.500"/><path d="M12 1v22M1 12h22M3 6.500h18M3 17.500h18" stroke="#a9c3e2"/><path d="M6 5l6 14 5-14 3-1" stroke="#555" stroke-width="1.800" fill="none"/><circle cx="6.500" cy="17" r="6" fill="#566"/><path d="M3 15l4 1-1 5M8 12l3 5" stroke="#eee" stroke-width="1.500" fill="none"/></symbol>
<symbol id="gnode" viewBox="0 0 24 24"><g stroke="#5f8bbf" stroke-width="4.400" stroke-linecap="round"><path d="M12 2.500v19M3.500 7l17 10M20.500 7l-17 10"/></g><circle cx="12" cy="12" r="2.500" fill="#5f8bbf" stroke="#3f6594" stroke-width=".8"/></symbol>
<symbol id="rast" viewBox="0 0 24 24"><path d="M1 1h22v22H1z" fill="#e8f0fa"/><path d="M1 1h7v7H1zM16 1h7v7h-7zM8 8h8v8H8zM1 16h7v7H1z" fill="#2f3f52"/><path d="M8 1h8v7H8zM16 8h7v8h-7z" fill="#9cc0ec"/><path d="M1 8h7v8H1zM8 16h8v7H8z" fill="#c3d9f2"/></symbol>
<symbol id="addl" viewBox="0 0 24 24"><path d="M2 2h17v17H2z" fill="#f6f6f4" stroke="#777" stroke-width="1.400"/><rect x="15" y="15" width="8" height="8" rx="3" fill="#dff0df" stroke="#3f9150" stroke-width="2"/></symbol>
<symbol id="reml" viewBox="0 0 24 24"><path d="M2 2h17v17H2z" fill="#f6f6f4" stroke="#777" stroke-width="1.400"/><rect x="14" y="16" width="10" height="7.500" rx="2" fill="#e8475c"/><path d="M16 19.800h6" stroke="#fff" stroke-width="2"/></symbol>
<symbol id="filter" viewBox="0 0 24 24"><path d="M1 4h22l-8 9v9l-5 2V13z" fill="#5f8bbf" stroke="#44709f"/><path d="M1 1h22v4H1z" fill="#fce94f" stroke="#c4a000"/></symbol>
<symbol id="coll" viewBox="0 0 24 24"><path d="M1 3h14M4 3v18h5M4 11h5" stroke="#777" stroke-width="1.500" fill="none"/><path d="M7 9h4v4H7zM7 17h4v4H7z" fill="#fff" stroke="#f08a1c" stroke-width="2"/><path d="M17 1l6.500 8H20v13h-6V9h-3.500z" fill="#5f8bbf" stroke="#2f4f76"/></symbol>
<symbol id="expn" viewBox="0 0 24 24"><path d="M1 3h14M4 3v18h5M4 11h5" stroke="#777" stroke-width="1.500" fill="none"/><path d="M7 9h4v4H7zM7 17h4v4H7z" fill="#fff" stroke="#f08a1c" stroke-width="2"/><path d="M17 23l6.500-8H20V2h-6v13h-3.500z" fill="#5f8bbf" stroke="#2f4f76"/></symbol>
<symbol id="brush" viewBox="0 0 24 24"><path d="M22 3l1 2-8 10-3-3z" fill="#d89a3a" stroke="#a56d1a"/><path d="M2 10l6-3 8 7-3 6-4 3z" fill="#f4b23a"/><path d="M2 10l4-2 8 8-2 4z" fill="#f6e04a"/><path d="M4 14l6 9-5-1-4-5z" fill="#e5483a"/></symbol>
<symbol id="group" viewBox="0 0 24 24"><path d="M6 5h14v12H6z" fill="#eee" stroke="#777" stroke-width="1.300"/><path d="M4 9v12h12M1.500 12v11.500h11" stroke="#777" stroke-width="1.400" fill="none"/><path d="M12 15V4c0-4 4-4 4 0v10" stroke="#666" stroke-width="1.500" fill="none"/><use href="#b-plus"/></symbol>
<symbol id="eye" viewBox="0 0 24 24"><path d="M1 12c5-8 16-8 21 0-5 7-16 7-21 0z" fill="#fff" stroke="#888" stroke-width="1.600"/><path d="M3 5c6-4 13-3 18 2" stroke="#aaa" fill="none" stroke-width="1.500"/><circle cx="12" cy="11.500" r="5" fill="#5f8bbf"/><circle cx="12" cy="11.500" r="2.200" fill="#223"/></symbol>
<symbol id="eps" viewBox="0 0 24 24"><path d="M12 3C7 0 3 3 5 7c-4 1-4 8 6 6M5 7h4" stroke="#777" stroke-width="2.200" fill="none"/><path d="M12 12h10v4l-2-1v9h-2v-8h-2v8h-2v-9l-2 1z" fill="#bbb"/></symbol>
<symbol id="gears" viewBox="0 0 24 24"><circle cx="7.500" cy="7.500" r="4" fill="none" stroke="#d2232a" stroke-width="3.600"/><path d="M7.500 .5v14M.5 7.500h14M2.500 2.500l10 10M12.500 2.500l-10 10" stroke="#d2232a" stroke-width="2"/><circle cx="18" cy="13" r="3" fill="none" stroke="#777" stroke-width="2.400"/><path d="M18 8v10M13 13h10M14.500 9.500l7 7M21.500 9.500l-7 7" stroke="#777" stroke-width="1.400"/><circle cx="11" cy="20" r="3.600" fill="#8fb0e0"/></symbol>
<symbol id="doc" viewBox="0 0 24 24"><path d="M4 1h11l5 5v17H4z" fill="#f6f6f4" stroke="#999" stroke-width="1.500"/><path d="M7 9h10M7 12.500h10M7 16h10M7 19.500h7" stroke="#888" stroke-width="1.600"/></symbol>
<symbol id="edb" viewBox="0 0 24 24"><path d="M2 3h14v13H2z" fill="#ccc9b0"/><path d="M12 22l8-14 3 2-7 13z" fill="#bbb"/></symbol>
<symbol id="wrench" viewBox="0 0 24 24"><path d="M13 12l9 9.500" stroke="#8a7a2a" stroke-width="5.500"/><path d="M13.500 12.500l8 8.500" stroke="#f2dc72" stroke-width="3.600"/><path d="M1 4l4 3 2-2-1-4c4 0 5 3 4 6l4 4-3 3-4-4C3 11 1 8 1 4z" fill="#eee" stroke="#777"/></symbol>
<symbol id="srch" viewBox="0 0 24 24"><circle cx="9.500" cy="9" r="7.500" fill="none" stroke="#888" stroke-width="1.700"/><path d="M15 14.500l7.500 8" stroke="#888" stroke-width="2.400"/></symbol>
<symbol id="gdal" viewBox="0 0 24 24"><circle cx="15" cy="12" r="9" fill="#6fc0d8"/><path d="M12 8c3-2 6 0 5 3" stroke="#6a9a3a" stroke-width="2.500" fill="none"/><path d="M2 9l9-7M5 3l4 5" stroke="#555" stroke-width="1.500"/><text x="-.5" y="22.500" font-size="10" font-weight="700" font-family="Liberation Mono,monospace" textLength="24" fill="#111">GDAL</text></symbol>
<symbol id="grass" viewBox="0 0 24 24"><path d="M2 12l10-9 10 9-10 7zM2 15l10 7 10-7" fill="#f7f7f4" stroke="#777" stroke-width="1.200"/><path d="M12 17V6M12 17C10 12 7 11 6 8M12 17c2-5 5-6 6-9M12 17c-3-3-5-3-6-4M12 17c3-3 5-3 6-4" stroke="#2fa84a" stroke-width="1.700" fill="none"/></symbol>
<symbol id="saga" viewBox="0 0 24 24"><path d="M21 5C13-1 1 3 1 12s10 14 20 8M1 12h11l-4-4h15M23 12c-3 7-9 6-12 0" stroke="#1c5f9f" stroke-width="2.700" fill="none"/></symbol>
<symbol id="undock" viewBox="0 0 24 24"><rect x="1.300" y="1.300" width="21.400" height="21.400" rx="4" fill="#f4f4f4" stroke="#777" stroke-width="2"/><path d="M10 6h8v8h-8zM6 11h8v7H6z" fill="#f4f4f4" stroke="#666" stroke-width="1.900"/></symbol>
<symbol id="close" viewBox="0 0 24 24"><rect x="1.300" y="1.300" width="21.400" height="21.400" rx="4" fill="#f4f4f4" stroke="#777" stroke-width="2"/><path d="M6.500 6.500l11 11M17.500 6.500l-11 11" stroke="#555" stroke-width="4"/></symbol>
<symbol id="tick" viewBox="0 0 24 24"><path d="M5.500 12.500l4.500 5.500L18.500 5" stroke="#000" stroke-width="3" fill="none"/></symbol>
<symbol id="foot" viewBox="0 0 24 24"><path d="M5 5l5 14c2 5 10 3 8-2L12 3c-2-4-8-2-7 2z" fill="#ddd" stroke="#222" stroke-width="2"/><path d="M8 5l4 12M11 4l4 12M1 10l4 5M1 16l3 3M17 5l5-3M18 9l5-3" stroke="#222" stroke-width="1.800"/></symbol>
<symbol id="lock" viewBox="0 0 24 24"><path d="M7 11V6c0-6 10-6 10 0v5" fill="none" stroke="#8a8a8a" stroke-width="2.400"/><rect x="4" y="11" width="16" height="12" rx="1.500" fill="#5a5a5a"/></symbol>
<symbol id="crs" viewBox="0 0 24 24"><circle cx="12" cy="10.500" r="9.500" fill="#c4c4c4" stroke="#6a6a6a" stroke-width="1.400"/><path d="M12 1v22M2 10.500h20M4 5.500h16M4 15.500h16M12 1c-6 5-6 14 0 19M12 1c6 5 6 14 0 19" stroke="#666" stroke-width="1.300" fill="none"/><path d="M1 12l8 8M23 12l-8 8" stroke="#666" stroke-width="1.500"/></symbol>
<symbol id="msg" viewBox="0 0 24 24"><path d="M12 2c7 0 11 3.500 11 8.500 0 4-2 6.500-5 7.500l2 5-6-4C6 19.500 1 16 1 10.500 1 5.500 5 2 12 2z" fill="#585858"/><circle cx="7" cy="10.500" r="1.700" fill="#fff"/><circle cx="12" cy="10.500" r="1.700" fill="#fff"/><circle cx="17" cy="10.500" r="1.700" fill="#fff"/></symbol>
</defs>
</svg>

<main class="window">
  <header class="titlebar">
    <svg class="logo"><use href="#qgis"/></svg><span>*Untitled Project — QGIS</span>
    <svg class="wbtns" viewBox="0 0 260 40"><path d="M4 21h26" stroke="#111" stroke-width="3"/><rect x="119" y="8" width="25" height="24" rx="3" fill="none" stroke="#111" stroke-width="3"/><path d="M233 8l25 25M258 8l-25 25" stroke="#111" stroke-width="2.600"/></svg>
  </header>
  <nav class="menu"><span>Pro<u>j</u>ect</span><span><u>E</u>dit</span><span><u>V</u>iew</span><span><u>L</u>ayer</span><span><u>S</u>ettings</span><span><u>P</u>lugins</span><span>Vect<u>o</u>r</span><span><u>R</u>aster</span><span><u>D</u>atabase</span><span><u>W</u>eb</span><span><u>M</u>esh</span><span>Pro<u>c</u>essing</span><span><u>H</u>elp</span></nav>
  <div class="tb"><i class="h"></i><svg><use href="#new"/></svg><svg><use href="#open"/></svg><svg><use href="#save"/></svg><svg><use href="#layout"/></svg><svg><use href="#report"/></svg><svg><use href="#styles"/></svg><i class="h"></i><span class="on"><svg><use href="#hand"/></svg></span><svg class="off"><use href="#pansel"/></svg><svg><use href="#zin"/></svg><svg><use href="#zout"/></svg><svg><use href="#zfull"/></svg><svg class="off"><use href="#zsel"/></svg><svg><use href="#zlay"/></svg><svg><use href="#znat"/></svg><svg><use href="#zlast"/></svg><svg class="off"><use href="#znext"/></svg><svg><use href="#map"/></svg><svg><use href="#map3d"/></svg><svg><use href="#bmnew"/></svg><svg><use href="#bm"/></svg><svg><use href="#clock"/></svg><svg><use href="#refresh"/></svg><i class="h"></i><svg><use href="#ident"/></svg><svg class="off"><use href="#abacus"/></svg><span class="on"><svg><use href="#gear"/></svg></span><svg><use href="#sigma"/></svg><svg class="off"><use href="#table"/></svg><i class="d"></i><svg><use href="#measure"/></svg><i class="d k"></i><svg><use href="#tip"/></svg><svg class="off"><use href="#gearptr"/></svg><i class="d"></i></div>
  <div class="tb"><i class="h"></i><svg><use href="#dsm"/></svg><svg><use href="#gpkgn"/></svg><svg><use href="#shp"/></svg><svg><use href="#feathern"/></svg><svg><use href="#mem"/></svg><svg><use href="#meshn"/></svg><svg><use href="#vtn"/></svg><i class="h"></i><svg class="off"><use href="#pens"/></svg><svg class="off"><use href="#pen"/></svg><svg class="off"><use href="#savee"/></svg><svg class="off"><use href="#line"/></svg><i class="d"></i><svg class="off"><use href="#pts"/></svg><svg class="off"><use href="#vtx"/></svg><i class="d"></i><svg class="off"><use href="#multi"/></svg><svg class="off"><use href="#trash"/></svg><svg class="off"><use href="#cut"/></svg><svg class="off"><use href="#copy"/></svg><svg class="off"><use href="#paste"/></svg><svg class="off"><use href="#undo"/></svg><svg class="off"><use href="#redo"/></svg><i class="h"></i><svg><use href="#meta1"/></svg><svg><use href="#meta2"/></svg><svg><use href="#binoc"/></svg><i class="h"></i><svg><use href="#pyc"/></svg><svg><use href="#osmsearch"/></svg><i class="h"></i><svg><use href="#help"/></svg><i class="h"></i><i class="h"></i><svg class="off"><use href="#tag"/></svg><svg class="off"><use href="#diag"/></svg><i class="s"></i><svg><use href="#tagpin"/></svg><svg><use href="#tagred"/></svg><i class="s"></i><svg class="off"><use href="#tagpin2"/></svg><svg class="off"><use href="#tageye"/></svg><svg class="off"><use href="#taggo"/></svg><svg class="off"><use href="#tagrot"/></svg><svg class="off"><use href="#taged"/></svg></div>
  <div class="tb"><i class="h"></i><svg class="off"><use href="#tri"/></svg><svg class="off"><use href="#ptsm"/></svg><i class="d"></i><svg class="off"><use href="#a1"/></svg><svg class="off"><use href="#a2"/></svg><svg class="off"><use href="#a3"/></svg><svg class="off"><use href="#a4"/></svg><svg class="off"><use href="#a5"/></svg><svg class="off"><use href="#a6"/></svg><svg class="off"><use href="#a7"/></svg><svg class="off"><use href="#a8"/></svg><svg class="off"><use href="#a9"/></svg><svg class="off"><use href="#a10"/></svg><svg class="off"><use href="#a11"/></svg><svg class="off"><use href="#a12"/></svg><svg class="off"><use href="#a13"/></svg><svg class="off"><use href="#a13"/></svg><svg class="off"><use href="#a14"/></svg><svg class="off"><use href="#a15"/></svg><svg class="off"><use href="#a16"/></svg><i class="d"></i><i class="h"></i><svg><use href="#hist"/></svg><svg><use href="#histm"/></svg><svg class="off gray"><use href="#hist"/></svg><svg class="off gray"><use href="#histm"/></svg><svg><use href="#sunu"/></svg><svg><use href="#sund"/></svg><svg><use href="#conu"/></svg><svg><use href="#cond"/></svg><svg><use href="#gamu"/></svg><svg><use href="#gamd"/></svg></div>
  <div class="tb"><i class="h"></i><svg class="off"><use href="#arc"/></svg><i class="d"></i><svg class="off"><use href="#circ"/></svg><i class="d"></i><svg class="off"><use href="#ell"/></svg><i class="d"></i><svg class="off"><use href="#rct"/></svg><i class="d"></i><svg class="off"><use href="#poly"/></svg><i class="d"></i><i class="h"></i><svg><use href="#georef"/></svg><i class="h"></i><svg class="half"><use href="#selrect"/></svg><i class="h"></i><svg class="off"><use href="#selfeat"/></svg><i class="d"></i><svg class="off"><use href="#selval"/></svg><i class="d"></i><svg><use href="#desel"/></svg><i class="d k"></i><svg><use href="#selloc"/></svg><i class="h"></i><svg class="off"><use href="#m1"/></svg><svg class="off"><use href="#m2"/></svg><i class="d"></i><svg class="off"><use href="#m3"/></svg><svg class="off"><use href="#m4"/></svg><i class="d"></i><i class="h"></i><svg><use href="#ann"/></svg><i class="d k"></i><svg><use href="#annsel"/></svg><svg><use href="#npoly"/></svg><svg><use href="#nline"/></svg><svg><use href="#nstar"/></svg><svg><use href="#ntext"/></svg><i class="s"></i><svg><use href="#tbal"/></svg><i class="d k"></i></div>

  <div class="body">
    <aside class="left">
      <section class="dock browser">
        <h2>Browser<svg><use href="#undock"/></svg><svg><use href="#close"/></svg></h2>
        <div class="tools"><svg><use href="#addl"/></svg><svg><use href="#refresh"/></svg><svg><use href="#filter"/></svg><svg><use href="#coll"/></svg><svg><use href="#info"/></svg></div>
        <ul class="tree">
          <li><b></b><svg><use href="#star"/></svg>Favorites</li>
          <li><b class="a"></b><svg><use href="#bm"/></svg>Spatial Bookmarks</li>
          <li><b class="a"></b><svg><use href="#home"/></svg>Home</li>
          <li><b class="a"></b><svg><use href="#fold"/></svg>C:\</li>
          <li><b class="a"></b><svg><use href="#fold"/></svg>E:\ (Data)</li>
          <li><b></b><svg><use href="#gpkg"/></svg>GeoPackage</li>
          <li><b></b><svg><use href="#feather"/></svg>SpatiaLite</li>
          <li><b></b><svg><use href="#pg"/></svg>PostgreSQL</li>
          <li><b></b><svg><use href="#hana"/></svg>SAP HANA</li>
          <li><b></b><svg><use href="#mssql"/></svg>MS SQL Server</li>
          <li><b></b><svg><use href="#ora"/></svg>Oracle</li>
          <li><b class="v"></b><svg><use href="#world"/></svg>WMS/WMTS</li>
          <li class="sub"><b class="a"></b><svg><use href="#conn"/></svg>WMS_ICGS</li>
          <li><b></b><svg><use href="#vt"/></svg>Vector Tiles</li>
          <li><b class="a"></b><svg><use href="#xyz"/></svg>XYZ Tiles</li>
          <li><b></b><svg><use href="#wcs"/></svg>WCS</li>
          <li class="wide"><b></b><svg><use href="#wfs"/></svg>WFS / OGC API - Features</li>
          <li><b></b><svg><use href="#arc2"/></svg>ArcGIS REST Servers</li>
          <li><b></b><svg><use href="#gnode"/></svg>GeoNode</li>
        </ul>
      </section>
      <section class="dock layers">
        <h2>Layers<svg><use href="#undock"/></svg><svg><use href="#close"/></svg></h2>
        <div class="tools"><svg><use href="#brush"/></svg><svg><use href="#group"/></svg><span class="dd"><svg><use href="#eye"/></svg></span><span class="dd"><svg><use href="#filter"/></svg></span><svg class="off"><use href="#eps"/></svg><i class="d"></i><svg><use href="#expn"/></svg><svg><use href="#coll"/></svg><svg><use href="#reml"/></svg></div>
        <ul class="tree">
          <li><b class="a"></b><span class="chk"><svg><use href="#tick"/></svg></span><svg><use href="#rast"/></svg><strong>AP_26885_FBS_F0200_RT1.dem</strong></li>
          <li><b class="a"></b><span class="chk"><svg><use href="#tick"/></svg></span><svg><use href="#rast"/></svg><strong class="base"><u>OpenStreetMap</u></strong></li>
        </ul>
      </section>
    </aside>

    <svg class="map" viewBox="1352 442 1696 1643" preserveAspectRatio="none">
      <defs>
        <filter id="wig" x="-5%" y="-5%" width="110%" height="110%"><feTurbulence type="fractalNoise" baseFrequency=".035" numOctaves="3" seed="4"/><feDisplacementMap in="SourceGraphic" scale="17" xChannelSelector="R" yChannelSelector="G"/></filter>
        <filter id="rough" x="-5%" y="-5%" width="110%" height="110%"><feTurbulence type="fractalNoise" baseFrequency=".04" numOctaves="4" seed="9"/><feDisplacementMap in="SourceGraphic" scale="44" xChannelSelector="R" yChannelSelector="G"/></filter>
        <filter id="soft"><feGaussianBlur stdDeviation="16"/></filter>
        <filter id="soft2"><feGaussianBlur stdDeviation=".9"/></filter>
        <filter id="relief" x="0" y="0" width="1" height="1" color-interpolation-filters="sRGB">
          <feTurbulence type="fractalNoise" baseFrequency=".022" numOctaves="6" seed="7" result="n"/>
          <feDisplacementMap in="SourceGraphic" in2="n" scale="20" xChannelSelector="R" yChannelSelector="G" result="d"/>
          <feColorMatrix in="n" type="matrix" values="1 0 0 0 0 1 0 0 0 0 1 0 0 0 0 0 0 0 0 1" result="g"/>
          <feComposite in="d" in2="g" operator="arithmetic" k2="1" k3=".26" k4="-.11"/>
          <feComponentTransfer>
            <feFuncR type="table" tableValues=".78 .86 .90 .94 .97 .93 .80 .60 .36"/>
            <feFuncG type="table" tableValues=".36 .42 .57 .74 .92 .95 .90 .79 .62"/>
            <feFuncB type="table" tableValues=".33 .35 .39 .49 .70 .73 .71 .74 .80"/>
          </feComponentTransfer>
        </filter>
        <clipPath id="demclip"><path d="M1852 966H2174V968H2537V1300H2536V1578H2290V1576H1850V1146H1852Z"/></clipPath>
      </defs>
      <rect x="1340" y="440" width="1720" height="1660" fill="#f2efe9"/>
      <!-- woodland -->
      <g fill="#bfdbb2" filter="url(#rough)">
        <g transform="translate(1340 430) scale(.5548 .574)">
          <path d="M780 930L810 915L845 950L880 960L885 910L905 890L930 930V1060H880L830 1030L800 985L780 970ZM1010 935L1020 905L1070 888L1150 905L1160 935ZM800 1030L830 1040V1090L800 1070ZM670 790L720 775L710 820L680 830Z"/>
        </g>
        <g transform="translate(2200 430) scale(.5548 .574)">
          <path d="M600 1030L640 970L700 930L760 980L880 985L860 1040L850 1100L880 1140L830 1210L780 1250L680 1280L600 1250ZM880 1060L930 1000L1040 1000L1000 1050L900 1085ZM600 1310L700 1290L840 1270L820 1310L720 1340L700 1380L610 1340ZM800 1350L920 1300L970 1355L880 1380ZM760 1430L860 1390L870 1420L800 1470L760 1510L690 1545L740 1470ZM160 840H220L210 920L150 940ZM1100 1370L1150 1350L1160 1375Z"/>
        </g>
        <g transform="translate(2200 1300) scale(.5548 .5102)">
          <path d="M600 400L640 310L700 300L735 340V400L725 500L670 590L630 600L600 580ZM1525 410L1470 400L1410 460L1370 510L1350 620L1290 650L1210 660L1240 690L1290 700L1250 770L1290 800L1390 800L1545 945ZM1330 1260L1400 1220L1470 1200L1480 1250L1440 1340L1390 1350L1380 1290ZM1280 1510L1370 1480L1500 1470V1520L1440 1540H1290ZM400 1540L460 1510V1540ZM200 560L270 520L275 580ZM120 610L170 560L170 610ZM980 180L1010 170L1010 230ZM980 290L1010 260L1010 330ZM1040 290L1090 270L1070 310Z"/>
        </g>
      </g>
      <g fill="none" stroke="#90c98d" stroke-width="9" stroke-linejoin="round" opacity=".9" filter="url(#rough)">
        <path d="M2545 1020L2575 1000L2600 985L2620 1020L2650 1005L2680 1030L2640 1045M2590 1090L2640 1105L2680 1080L2640 1120L2600 1105M2640 1200L2720 1185L2740 1205L2680 1215L2650 1240"/>
      </g>
      <g fill="#d3e9b6"><path d="M2465 1790L2495 1770L2518 1820L2495 1842L2478 1830Z"/><path d="M2862 838H2890L2885 890H2862Z" fill="#d0dfb9"/><path d="M2583 1980H2605V2015L2595 2035L2583 2010Z" fill="#bfe2b0"/><path d="M1700 1300H1740V1400L1725 1580H1690L1695 1420Z" fill="#eef0dc"/><path d="M1812 1920H1860V1955H1812Z" fill="#eef0dc"/></g>
      <!-- sea and lagoons -->
      <g fill="#aad3df">
        <g transform="translate(1340 430) scale(.5548 .574)">
          <path d="M0 0H1570V815L1490 808L1440 815L1385 798L1360 812L1230 783L1168 745L1075 715L1035 683L950 665L910 662L905 690L885 668L860 690L850 715L825 708L830 690L812 662L798 712L778 690L770 718L752 685L728 705L740 745L710 735L700 750L680 735L672 755L660 765L672 720L655 705L655 775L650 790L665 800L625 820L635 840L600 880L605 910L590 945L610 985L600 1040L630 1085L630 1130L600 1165L570 1210L500 1260L420 1275L330 1280L180 1275L110 1260L0 1235Z"/>
          <path d="M180 1280L165 1310L160 1340L132 1390L160 1430L185 1480L188 1500L215 1568H402L430 1490L450 1460L455 1410L490 1360L530 1330L545 1300L520 1255L400 1285Z"/>
          <path d="M530 1260L560 1280L560 1370L540 1360L530 1420L490 1450L520 1380Z"/>
        </g>
        <path d="M1459 1326L1466 1398L1510 1395L1545 1380L1562 1350L1578 1315L1590 1295H1452Z"/>
        <g filter="url(#rough)"><path d="M1352 1255L1400 1240L1440 1270L1450 1310L1410 1330L1370 1300ZM1380 1340L1430 1345L1430 1380L1390 1380ZM1355 1400L1400 1410L1390 1430L1358 1425ZM1355 1200L1375 1220L1360 1235Z"/>
        <path d="M2660 790L2670 760L2700 770L2740 735L2760 750L2735 780L2700 800ZM2930 590L2955 580L2960 600L2940 610Z"/></g>
        <g transform="translate(2200 430) scale(.5548 .574)"><path d="M-10 0H1530V105L1490 125L1440 170L1390 195L1310 290L1315 300L1235 340L1160 385L1070 420L1000 490L935 545L865 570L845 605L795 635L785 660L740 695L690 730L650 765L515 803H440L370 812L300 803L215 822L160 818L120 805L-10 822Z"/></g>
      </g>
      <g transform="translate(1340 430) scale(.5548 .574)">
        <path d="M672 752L710 745L745 735L752 695L775 722L800 715L860 722L905 670L1035 688L1075 718L1168 750L1120 768L1060 758L990 725L940 760L860 790H760L710 780L665 775Z" fill="#c3dcb4"/>
        <path d="M510 1330L552 1375L500 1430L450 1455L465 1410Z" fill="#d2dfbb"/>
        <g fill="none" stroke="#82c2a0" stroke-width="5"><path d="M645 775L655 690L825 637L930 636L985 641L1045 652L1193 720L1170 745M655 780L690 762L740 768L785 735L890 758L965 750L990 717L1060 745L1165 755"/><path d="M18 1202L80 1210L110 1232L170 1232L225 1170L330 1135L350 1145L405 1097L422 1115L420 1280M165 1290L155 1345L125 1385L85 1400L20 1410"/></g>
      </g>
      <!-- rivers -->
      <g fill="none" stroke="#9dcfe0" stroke-width="4.500" filter="url(#wig)">
        <g transform="translate(1340 430) scale(.5548 .574)"><path d="M630 940L690 945L705 975L800 1010L840 1030L920 1020M820 1060V1110L780 1140L700 1165L640 1175M920 1180L890 1190L770 1210L640 1200M920 1330L840 1350L800 1385L740 1395M570 1295L640 1305L700 1300L785 1290M500 1450L640 1450L700 1405M540 1450L545 1510L590 1530L610 1568M1000 780L955 840L935 885L945 930M825 880L825 920M1215 800L1170 825L1155 868M1235 830L1225 900L1150 925M1385 820L1400 880L1370 930M820 1440L800 1500M640 1068L690 1050"/></g>
        <g transform="translate(2200 430) scale(.5548 .574)"><path d="M750 700L765 735L810 780L860 820L1100 840L1135 890L1140 960L1090 1010L930 990L870 1060L830 1090L740 1120M1090 1010L1105 1050L1000 1170L945 1195M1040 1020L985 1080L920 1165M860 820L845 880L825 930L760 980L720 975M600 815L700 820L700 870L660 930L610 980M770 790L765 870L740 940M425 805L440 850L430 930M305 810L330 880L335 930M560 840L540 890L485 915M1155 630L1190 655L1250 680L1270 725M1262 835L1285 880L1250 960L1240 1060L1200 1140M1485 870L1400 880L1370 960L1375 1000M610 1310L740 1280L820 1230L915 1255L860 1300L760 1340M1000 1305L1040 1340L1080 1385L1200 1360L1300 1395M1525 1260L1440 1330M700 1430L870 1410L935 1440L940 1500L1070 1568M1370 380L1440 400L1470 430L1525 445"/></g>
        <g transform="translate(1340 1300) scale(.5548 .5102)"><path d="M590 0L635 100L740 140L830 130L918 150M750 50L800 75L870 65M380 130L430 180L470 235L540 270L575 350L625 420M400 140L415 195M275 195L240 270L300 340L400 355L460 385L540 440L590 510L680 570M620 305L690 345L790 365L820 405L850 330L918 290M670 460L750 475L830 460L880 430L918 390M680 600L790 640L840 690L920 745L1020 705L1050 630L1100 635L1140 590L1250 580L1380 500L1430 480M800 640L880 580L918 510M1030 700L1050 680L1140 692M940 880L905 910L885 950M1265 940L1200 960L1170 1000L1050 1040L1000 1035M815 1320L825 1375L860 1430M70 570L130 550"/></g>
        <g transform="translate(2200 1300) scale(.5548 .5102)"><path d="M610 90L640 190L640 250L780 320L850 370L920 400L930 480M540 540L570 570L640 600L700 640L790 700M745 410L760 450L820 470L840 540L815 650M800 690L770 760L720 850L690 940L660 1050L610 1130L530 1190L460 1260L400 1360L290 1390L280 1480L210 1500L195 1540M535 1180L600 1225L690 1220L760 1190L810 1120L880 1085L980 1090M725 870L800 900L900 905L1000 880L1060 900L1090 970L1145 985M1195 1140L1140 1200L1060 1240L980 1320L920 1345L880 1320L850 1360L840 1410L800 1450M880 1320L910 1305M710 1365L750 1440M950 0L1075 50L1095 250L1060 290L985 355M1075 120M865 105L920 120V140M1300 55L1310 110L1355 165M1035 385L1110 390M1180 285L1230 310M860 800L1080 815M140 1190L158 1225M230 1130V1160M1525 1420L1470 1430M690 1340L700 1360"/></g>
      </g>
      <!-- administrative limits -->
      <g fill="none" stroke="#cfc4b9" stroke-width="4" filter="url(#wig)"><g transform="translate(2200 430) scale(.5548 .574)"><path d="M1310 465L1305 490L1320 560V720L1370 708L1420 715L1430 670L1525 665M610 920L640 930L700 900L740 950L825 930L830 1020L860 1120L920 1165L985 1180L925 1240M1000 1310L900 1340L820 1420V1500L750 1550M1320 300L1360 340L1380 420L1420 450M170 850L200 880L160 900L220 920"/></g><g transform="translate(1340 1300) scale(.5548 .5102)"><path d="M1110 540L1140 580L1200 590L1235 620L1215 675L1330 720L1400 720L1440 760L1568 740"/></g><g transform="translate(2200 1300) scale(.5548 .5102)"><path d="M0 745H230L268 560L410 545M450 545L445 570L480 575L495 550M770 0L740 70L690 100L650 110V190M660 270L730 320L730 370L670 350M620 380H740"/></g></g>
      <g fill="none" stroke="#97c893" stroke-width="4" filter="url(#wig)"><g transform="translate(1340 1300) scale(.5548 .5102)"><path d="M455 0L400 80L375 140L360 230L300 235L250 290L260 360L190 385L150 425L90 390M445 0L400 50L370 110L365 155L228 192L220 60"/></g><path d="M2750 725L2755 750L2705 815H2654V785M2920 1728L2960 1735L3000 1748L3010 1738L3046 1775M2920 2085L2960 2060L3010 2030L3046 2028" /></g>
      <!-- railway and minor roads -->
      <g fill="none" stroke="#a3a3a3" stroke-width="3.500"><path stroke="#8e8e8e" d="M1687 1079L1688 1107L1681 1130L1684 1167L1723 1225L1737 1230L1730 1262L1738 1330L1743 1375L1755 1395L1740 1450L1717 1520L1724 1580H1719V1620L1760 1670L1782 1694L1786 1712L1779 1740L1789 1785L1830 1880L1955 2060L1970 2087"/><path stroke="#bcbcbc" d="M2907 642L2898 717L2910 832L2900 886L2916 918L2977 928L3046 955M2900 886L2871 889L2844 883L2799 892L2766 906L2727 869L2708 868M3013 516L3015 539L2971 562L2960 619M2590 1650L2594 1722L2660 1716L2780 1705"/></g>
      <!-- secondary roads -->
      <g fill="none" stroke="#fbc783" stroke-width="5"><path d="M1740 938L1717 952L1698 984L1692 1027L1691 1056M2815 1360L2845 1405L2877 1460L2860 1495L2835 1500L2800 1545M2790 1555L2747 1553L2652 1718L2648 1770L2606 1840L2575 1870L2567 1905L2577 1928L2596 1937L2592 1998L2594 2050L2586 2087M2575 1662H2590L2645 1712L2655 1712M2590 2060L2540 2080L2505 2087M1695 900L1740 915"/></g>
      <!-- trunk roads -->
      <g fill="none" stroke="#fa9078" stroke-width="5.500" stroke-linejoin="round">
        <g transform="translate(1340 430) scale(.5548 .574)"><path stroke-width="8" d="M780 838L835 797L900 788L990 767L1130 778L1170 757L1215 790L1260 828L1380 825L1500 843L1550 830L1680 810L1700 833L1800 838L1850 862L1880 898L1960 900L1995 880L2150 885L2200 863L2240 885L2380 810L2455 790L2515 630L2560 545L2650 430L2750 375M670 880C660 910 605 925 605 945L620 1000L612 1040L640 1120L650 1180L640 1210L660 1260L703 1305L735 1400L738 1440L785 1500L815 1570L828 1622M18 1244L110 1265L185 1278M410 1278L480 1265L520 1243M2860 375L2890 398L2925 380L3035 403M3075 1150L3050 1230L3015 1260L3010 1310L2985 1350L2990 1370L2970 1395M2840 1430L2760 1490L2690 1568"/></g>
        <path d="M1799 1361L1798 1380L1783 1382L1740 1450L1733 1500L1738 1625L1785 1710L1812 1738L1880 1840L1910 1890L1935 1960L1984 2087M2035 2087L2070 2062L2085 2030L2105 2010L2135 2005L2140 1990L2190 1965L2265 1905L2320 1880L2360 1872L2430 1825L2452 1790L2520 1740L2532 1708L2575 1658L2565 1608L2585 1590L2605 1560L2610 1500L2640 1470L2660 1475L2700 1462L2710 1450L2735 1395L2765 1368L2800 1355M2830 1336L2866 1300"/>
      </g>
      <g fill="none" stroke-linejoin="round">
        <path d="M1350 742L1506 689L1623 643L1756 585L1895 525L2088 440" stroke="#9c86aa" stroke-width="7"/>
        <g stroke="#9c86aa" stroke-width="8"><g transform="translate(1340 430) scale(.5548 .574)"><path d="M1568 815L1490 808L1440 815L1385 798L1360 812L1230 783L1168 745L1075 715L1035 683L950 665L930 672L910 662L905 690L885 668L860 690L850 715L825 708L830 690L812 662L798 712L778 690L770 718L752 685L728 705L740 745L710 735L700 750L680 735L672 755L660 765L672 720L655 705M652 775L650 790L665 800L625 820L635 840L600 880L605 910L590 945L610 985L600 1040L630 1085L630 1130L600 1165L570 1210L500 1260L420 1275L330 1280L180 1275L110 1260L18 1238" stroke-width="9"/></g>
        <g transform="translate(2200 430) scale(.5548 .574)" stroke-width="10"><path d="M1530 105L1490 125L1440 170L1390 195L1310 290L1315 300L1235 340L1160 385L1070 420L1000 490L935 545L865 570L845 605L795 635L785 660L740 695L690 730L650 765L515 803H440L370 812L300 803L215 822L160 818L120 805L-20 824"/></g></g>
        <path d="M2285 890L2283 920L2270 955L2265 970M2165 890L2170 920L2190 945L2195 970" stroke="#7fa08a" stroke-width="6" filter="url(#wig)"/>
        <g filter="url(#wig)"><g stroke="#9691b5" stroke-width="6"><path d="M1860 2090L1840 2060L1812 2015L1825 1980L1822 1960L1832 1930L1850 1880L1880 1850L1885 1830L1920 1800L1930 1760L1960 1720L2000 1712L2060 1710L2110 1700L2135 1670L2160 1675L2168 1645L2210 1645L2220 1615L2290 1610L2295 1580M2560 1395L2590 1340L2575 1300L2545 1270M2740 1480L2735 1510L2720 1560L2690 1580L2680 1605L2655 1630L2680 1670V1705L2710 1710M2700 1700L2735 1680L2780 1695"/></g><path d="M2560 1395L2595 1385L2625 1418L2670 1412L2700 1440L2740 1478" stroke="#b59db8" stroke-width="5"/><path d="M2850 1690L2885 1675L2910 1672" stroke="#c9a8c9" stroke-width="5"/>
        <path d="M3060 1455L3010 1500L3000 1540L2965 1580L2955 1630L2915 1655L2912 1700L2920 1720L2903 1750L2908 1800L2905 1860L2895 1920L2890 1960L2893 1980L2860 2015L2855 2060L2845 2095" stroke="#c6a6c6" stroke-width="12" opacity=".7"/><path d="M3060 1455L3010 1500L3000 1540L2965 1580L2955 1630L2915 1655L2912 1700L2920 1720L2903 1750L2908 1800L2905 1860L2895 1920L2890 1960L2893 1980L2860 2015L2855 2060L2845 2095" stroke="#8f838f" stroke-width="7"/></g>
      </g>
      <!-- elevation raster -->
      <g clip-path="url(#demclip)">
        <g filter="url(#relief)"><g transform="scale(2.3814)">
          <rect x="765" y="395" width="312" height="278" fill="#585858"/>
          <g filter="url(#soft)">
            <path d="M790 450L850 430L910 450L970 440L1030 460L1070 500L1065 560L1020 600L990 670H850L800 620L825 560L785 520Z" fill="#8a8a8a"/>
            <path d="M825 515L900 500L960 490L1020 505L1010 560L960 620L880 625L845 580Z" fill="#b0b0b0"/>
            <path d="M855 535L905 525L975 540L975 580L930 612L885 600L865 575Z" fill="#dcdcdc"/>
            <path d="M765 395H1077V416L960 422L900 412L850 420L765 412Z" fill="#000"/>
            <path d="M1077 590L1035 605L1020 650L1000 675H1077ZM765 610L795 630L820 650L850 675H765Z" fill="#101010"/>
          </g>
          <g id="low" fill="none" stroke="#000" stroke-linecap="round" filter="url(#soft2)"></g>
          <g id="high" fill="none" stroke="#fff" stroke-linecap="round" filter="url(#soft2)"></g>
        </g></g>
        <g id="veins" transform="scale(2.3814)" fill="none" stroke="#8a3c22" stroke-linecap="round" opacity=".26"></g>
      </g>
      <!-- labels -->
      <g class="labels" transform="scale(2.3814)">
        <g class="city"><text x="717" y="391.500" textLength="78">Santa Marta</text><text x="698" y="481" textLength="48">Ciénaga</text><text x="1216" y="271" textLength="59">Riohacha</text><text x="721" y="672.500" textLength="61">Fundación</text><text x="1083" y="695" textLength="69">Valledupar</text><text x="1089" y="864" textLength="95">Agustín Codazzi</text></g>
        <g class="town"><text x="1225" y="291" textLength="45">Anaralito</text><text x="1062" y="375" textLength="35">Dibulla</text><text x="1225.500" y="522.500" textLength="56">Distracción</text><text x="1180" y="568.500" textLength="61">San Juan del</text><text x="1180" y="582" textLength="28">Cesar</text><text x="1212" y="619.500" textLength="46">El Molino</text><text x="1190" y="639" textLength="51">Villanueva</text><text x="1176" y="656" textLength="41">Urumita</text><text x="720" y="644" textLength="49">Aracataca</text><text x="952" y="715" textLength="63">Pueblo Bello</text><text x="1171" y="716.500" textLength="81">Manaure Balcón</text><text x="1185" y="730.500" textLength="46">del Cesar</text><text x="1112" y="746.500" textLength="51">San Diego</text><text x="904" y="772.500" textLength="73">Villa Germania</text><text x="769" y="802" textLength="50">Algarrobo</text><text x="808" y="819" textLength="43">El Copey</text><text x="710" y="866" textLength="50">San Ángel</text></g>
        <g class="town edge"><text x="1225.500" y="323" textLength="53">Kaintinmar</text><text x="1270.500" y="284" textLength="8">Iy</text><text x="1248" y="456" textLength="30">Haton</text><text x="1236" y="500" textLength="42.500">Barranca</text><text x="567.800" y="696">y</text><text x="567.800" y="868" textLength="4">o</text></g>
        <g class="park"><text x="632" y="468" textLength="51">Vía Parque</text><text x="632" y="481" textLength="31">Isla de</text><text x="632" y="494" textLength="53">Salamanca</text><text x="589.500" y="551" textLength="43">Santuario</text><text x="588.500" y="563.500" textLength="41">de Fauna</text><text x="587" y="576" textLength="32">y Flora</text><text x="587" y="588.500" textLength="38">Ciénaga</text><text x="587" y="601" textLength="35">Grande</text><text x="588" y="613.500" textLength="39">de Santa</text><text x="587" y="626.500" textLength="29">Marta</text></g>
        <g class="lagoon"><text x="636" y="517" textLength="39">Ciénaga</text><text x="636" y="529.500" textLength="35">Grande</text><text x="636" y="542" textLength="41">de Santa</text><text x="636" y="555" textLength="29">Marta</text></g>
        <g class="reserve"><text x="975" y="479" textLength="61">Resguardo</text><text x="975" y="494" textLength="78">Kogui-Malayo</text><text x="975" y="509" textLength="48">Arhuaco</text><text x="918" y="608.500" textLength="61">Resguardo</text><text x="918" y="624" textLength="48">Arhuaco</text><text x="918" y="639.500" textLength="66">de la Sierra</text><text x="918" y="655" textLength="43">Nevada</text></g>
        <g class="reserve small"><text x="1055" y="598.500" textLength="50">Resguardo</text><text x="1055" y="611.500" textLength="41">Indígena</text><text x="1055" y="624.500" textLength="50">Kankuamo</text></g>
      </g>
    </svg>

    <aside class="right">
      <h2>Processing Toolbox<svg><use href="#undock"/></svg><svg><use href="#close"/></svg></h2>
      <div class="tools"><span class="dd"><svg><use href="#gears"/></svg></span><span class="dd"><svg><use href="#python"/></svg></span><svg><use href="#clock"/></svg><svg><use href="#doc"/></svg><i class="s"></i><svg class="off"><use href="#edb"/></svg><i class="s"></i><svg><use href="#wrench"/></svg></div>
      <div class="search"><svg><use href="#srch"/></svg>Search...</div>
      <ul class="tree">
        <li><b class="a"></b><svg class="pale"><use href="#clock"/></svg>Recently used</li>
        <li><b class="a"></b><svg><use href="#qgis"/></svg>Cartography</li>
        <li><b class="a"></b><svg><use href="#qgis"/></svg>Database</li>
        <li><b class="a"></b><svg><use href="#qgis"/></svg>File tools</li>
        <li><b class="a"></b><svg><use href="#qgis"/></svg>GPS</li>
        <li><b class="a"></b><svg><use href="#qgis"/></svg>Interpolation</li>
        <li><b class="a"></b><svg><use href="#qgis"/></svg>Layer tools</li>
        <li><b class="a"></b><svg><use href="#qgis"/></svg>Mesh</li>
        <li><b class="a"></b><svg><use href="#qgis"/></svg>Network analysis</li>
        <li><b class="a"></b><svg><use href="#qgis"/></svg>Plots</li>
        <li><b class="a"></b><svg><use href="#qgis"/></svg>Raster analysis</li>
        <li><b class="a"></b><svg><use href="#qgis"/></svg>Raster creation</li>
        <li><b class="a"></b><svg><use href="#qgis"/></svg>Raster terrain analysis</li>
        <li><b class="a"></b><svg><use href="#qgis"/></svg>Raster tools</li>
        <li><b class="a"></b><svg><use href="#qgis"/></svg>Vector analysis</li>
        <li><b class="a"></b><svg><use href="#qgis"/></svg>Vector creation</li>
        <li><b class="a"></b><svg><use href="#qgis"/></svg>Vector general</li>
        <li><b class="a"></b><svg><use href="#qgis"/></svg>Vector geometry</li>
        <li><b class="a"></b><svg><use href="#qgis"/></svg>Vector overlay</li>
        <li><b class="a"></b><svg><use href="#qgis"/></svg>Vector selection</li>
        <li><b class="a"></b><svg><use href="#qgis"/></svg>Vector table</li>
        <li><b class="a"></b><svg><use href="#qgis"/></svg>Vector tiles</li>
        <li><b class="a"></b><svg class="big"><use href="#gdal"/></svg>GDAL</li>
        <li><b class="a"></b><svg><use href="#grass"/></svg>GRASS</li>
        <li><b class="a"></b><svg class="big"><use href="#saga"/></svg>SAGA</li>
      </ul>
    </aside>
  </div>

  <footer class="status">
    <div class="locate"><svg><use href="#srch"/></svg>Type to locate (Ctrl+K)</div>
    <span class="lbl l1">Coordinate</span><span class="box b1">739865,1159946</span>
    <svg class="ft"><use href="#foot"/></svg>
    <span class="lbl l2">Scale</span><span class="box b2">1:1146241<i class="cut"></i></span>
    <svg class="lk"><use href="#lock"/></svg>
    <span class="lbl l3">Magnifier</span><span class="box b3">100%<i class="spin"></i></span>
    <span class="lbl l4">Rotation</span><span class="box b4">0.0 °<i class="spin"></i></span>
    <span class="chk"><svg><use href="#tick"/></svg></span><span class="lbl l5">Render</span>
    <svg class="cr"><use href="#crs"/></svg><span class="lbl l6">EPSG:32618</span><svg class="ms"><use href="#msg"/></svg><i class="grip"></i>
  </footer>
</main>

<!-- numbered callouts -->
<div class="frame f1"></div><div class="frame f2"></div><div class="frame f3"></div><div class="frame f7"></div><div class="frame f5"></div><div class="frame f6"></div><div class="frame f4"></div>
<svg class="leader" viewBox="0 0 170 120"><path d="M3 12L157 112" stroke="#f00" stroke-width="9"/></svg>
<div class="dot n1">1</div><div class="dot n2">2</div><div class="dot n3">3</div><div class="dot n4">4</div><div class="dot n5">5</div><div class="dot n6">6</div><div class="dot n7">7</div>
<script src="relief.js"></script>
</body>
</html>
```
FILE: styles.css
```css
* { box-sizing: border-box; }
body { margin: 0; width: 3734px; height: 2368px; background: #fff; position: relative; overflow: hidden; font: 27px/1 "Open Sans", "Noto Sans", sans-serif; letter-spacing: .45px; color: #0a0a14; }
.sprite { position: absolute; width: 0; height: 0; }
svg text { letter-spacing: 0; }
.window { width: 3394px; margin-left: 331px; height: 2163px; border: 1px solid #a8a8a8; border-top: 4px solid #a9a9a9; border-radius: 16px 20px 16px 12px; background: #f0f0f0; display: flex; flex-direction: column; overflow: hidden; }
.titlebar { height: 75px; flex: none; background: #fff; display: flex; align-items: center; padding: 0 42px 7px 19px; font-size: 29px; letter-spacing: -.2px; }
.logo { width: 40px; height: 40px; margin-right: 13px; }
.wbtns { width: 260px; height: 40px; margin-left: auto; }
.menu { height: 52px; flex: none; display: grid; grid-template-columns: 127px 86px 98px 107px 141px 133px 121px 117px 155px 97px 109px 178px 120px; align-items: center; padding: 1px 0 0 26px; border-bottom: 3px solid #dadada; font-size: 28px; letter-spacing: .2px; }
.menu u { text-decoration-thickness: 2px; text-underline-offset: 5px; }
.tb { height: 78px; flex: none; display: flex; align-items: center; background: linear-gradient(#fcfcfc, #f0f0f0); border-bottom: 3px solid #bdbdbd; padding-top: 2px; }
.tb:nth-of-type(4) { height: 77px; }
.tb svg { width: 40px; height: 40px; margin: 0 11.5px; flex: none; overflow: visible; }
.tb .on { width: 59px; height: 59px; margin: 0 2px; padding: 8px 9px; background: #dedede; border: 2px solid #ababab; border-radius: 6px; display: flex; }
.tb .on svg { margin: 0; width: 38px; height: 38px; }
.off { opacity: .28; filter: grayscale(.55); }
.off.gray { filter: grayscale(1); opacity: .35; }
.half { opacity: .75; }
.h { width: 41px; height: 40px; flex: none; background: radial-gradient(circle, #b2b2b2 1.3px, transparent 1.8px) 21px 0 / 8px 6.500px; clip-path: inset(0 8px 0 17px); }
.h:first-child { width: 31px; background-position-x: 14px; clip-path: inset(0 7px 0 9px); }
.d { width: 30px; height: 14px; flex: none; position: relative; }
.d::before, .dd::after { content: ""; position: absolute; left: 4px; top: 0; border: 9.500px solid transparent; border-top: 12px solid #9d9d9d; border-bottom: 0; }
.d.k::before { border-top-color: #4c4c4c; }
.s { width: 2px; height: 38px; margin: 0 8px; background: #d6d6d6; flex: none; }
.body { flex: none; height: 1649px; display: grid; grid-template-columns: 1017px 1699px 1fr; }
.left { display: flex; flex-direction: column; }
.dock { display: flex; flex-direction: column; padding-right: 16px; }
.browser { height: 1042px; }
.layers { height: 607px; padding-top: 12px; }
h2 { margin: 0; font: inherit; height: 56px; padding: 4px 5px 0 11px; display: flex; align-items: center; gap: 8px; flex: none; }
h2 svg { width: 28px; height: 28px; margin-top: -4px; }
h2 svg:first-of-type { margin-left: auto; }
.tools { height: 71px; display: flex; align-items: center; padding: 0 0 10px 20px; gap: 25px; flex: none; }
.tools svg { width: 38px; height: 38px; flex: none; display: block; overflow: visible; }
.tools .s { margin: 0 -7px 0 0; }
.tools .d { margin: 0 -9px 0 -20px; }
.dd { position: relative; }
.dd::after { left: 27px; top: 29px; border-width: 7px; border-top: 9px solid #555; border-bottom: 0; }
.tree { list-style: none; margin: 0; padding: 2px 0 0; background: #fff; border: 2px solid #bcbcbc; border-left: 0; flex: 1; }
.tree li { height: 45.360px; display: flex; align-items: center; white-space: nowrap; }
.tree li.wide { letter-spacing: 1.100px; }
.tree li > svg { width: 40px; height: 40px; margin-right: 17px; flex: none; overflow: visible; }
.tree li > b { width: 49px; flex: none; display: flex; justify-content: center; padding-right: 7px; }
.tree b.a::before { content: ""; border: 8px solid transparent; border-left: 10px solid #636363; border-right: 0; }
.tree b.v::before { content: ""; border: 9px solid transparent; border-top: 10px solid #636363; border-bottom: 0; }
.tree li.sub { padding-left: 41px; }
.tree li.sub > svg { width: 36px; height: 36px; margin: 0 17px 0 2px; }
.chk { width: 35px; height: 35px; background: #fff; border: 2px solid #b4b4b4; flex: none; border-radius: 3px; }
.chk svg { width: 31px; height: 31px; display: block; }
.layers .tree li > b { width: 60px; padding-right: 8px; }
.layers .tree li > svg { width: 35px; height: 35px; margin: 0 16px 0 19px; }
.layers .tree { padding-top: 2px; }
.layers .tools { height: 73px; }
strong { font-weight: 700; font-size: 28px; letter-spacing: 1.500px; }
strong.base { letter-spacing: .8px; }
strong u { text-underline-offset: 4px; text-decoration-thickness: 2px; }
.map { width: 1699px; height: 1646px; display: block; border-left: 3px solid #b0b0b0; border-bottom: 3px solid #b0b0b0; }
.labels text { font-family: "Noto Sans", sans-serif; text-anchor: middle; paint-order: stroke; stroke: #f5f3ee; stroke-width: 2.400px; stroke-opacity: .8; stroke-linejoin: round; fill: #454545; }
.labels .city text { font-size: 13.500px; }
.labels .town text { font-size: 11.400px; }
.labels .edge text { text-anchor: start; }
.labels .park text { font-size: 11px; font-style: italic; font-weight: 500; fill: #2f9a3c; }
.labels .lagoon text { font-size: 11px; font-style: italic; fill: #6a90c8; }
.labels .reserve text { font-size: 12.500px; font-style: italic; fill: #a5682c; fill-opacity: .38; stroke: none; }
.labels .reserve.small text { font-size: 11px; fill-opacity: .6; }
.right { padding-left: 26px; display: flex; flex-direction: column; height: 1646px; }
.right h2 { padding: 4px 3px 0 10px; letter-spacing: 1.300px; }
.right .tools { padding-left: 20px; height: 72px; }
.search { height: 55px; flex: none; background: #fff; border: 2px solid #b4b4b4; border-radius: 6px; display: flex; align-items: center; color: #7c7c88; padding-left: 18px; }
.search svg { width: 34px; height: 34px; margin-right: 17px; }
.right .tree { border-left: 2px solid #bcbcbc; padding-top: 1px; }
.right .tree li > b { width: 61px; padding-right: 13px; }
.right .tree li > svg { width: 35px; height: 35px; margin-right: 18px; }
.right .tree li > svg.big { width: 39px; height: 39px; margin: 0 16px 0 -2px; }
.pale { opacity: .8; }
.status { flex: 1; display: flex; align-items: flex-start; position: relative; padding-left: 12px; white-space: nowrap; font-size: 26px; letter-spacing: 0; }
.locate { width: 496px; height: 58px; margin-top: 2px; background: #fff; border: 2px solid #b4b4b4; border-radius: 8px; display: flex; align-items: center; padding: 8px 0 0 19px; color: #8a8a8a; font-size: 27px; letter-spacing: .3px; }
.locate svg { width: 32px; height: 32px; margin-right: 17px; }
.lbl { height: 68px; line-height: 70px; flex: none; }
.box { height: 58px; margin-top: 3px; background: #fff; border: 2px solid #b0b0b0; border-radius: 6px; line-height: 62px; padding-left: 16px; flex: none; position: relative; letter-spacing: .4px; }
.l1 { margin-left: 809px; width: 143px; }
.b1 { width: 243px; }
.ft { width: 42px; height: 42px; margin: 13px 30px 0 9px; }
.l2 { width: 74px; }
.b2 { width: 202px; padding-left: 10px; letter-spacing: .9px; }
.lk { width: 38px; height: 40px; margin: 13px 17px 0 27px; }
.l3 { width: 122px; }
.b3 { width: 209px; padding-left: 11px; }
.l4 { margin-left: 23px; width: 128px; }
.b4 { width: 210px; padding-left: 9px; }
.cut, .spin { position: absolute; right: 0; top: 0; bottom: 0; width: 49px; border-left: 2px solid #c0c0c0; background: linear-gradient(#fff, #f0f0f0); border-radius: 0 5px 5px 0; }
.spin { width: 35px; }
.cut::before, .spin::before, .spin::after { content: ""; position: absolute; left: 12px; top: 24px; border: 9px solid transparent; border-top: 11px solid #5a5a5a; border-bottom: 0; }
.spin::before { left: 8px; top: 35px; }
.spin::after { left: 8px; top: 14px; border: 9px solid transparent; border-bottom: 11px solid #5a5a5a; border-top: 0; }
.status .chk { margin: 17px 11px 0 16px; }
.l5 { width: 128px; }
.cr { width: 38px; height: 38px; margin: 14px 4px 0 0; }
.l6 { width: 209px; letter-spacing: .8px; }
.ms { width: 42px; height: 42px; margin-top: 13px; }
.grip { width: 27px; height: 27px; margin: 38px 0 0 auto; background: radial-gradient(circle, #a8a8a8 1.400px, transparent 1.900px) 0 0 / 9px 9px; clip-path: polygon(100% 0, 100% 100%, 0 100%); }
.frame { position: absolute; border: 10px solid #f00; }
.f1 { left: 325px; top: 60px; width: 3409px; height: 389px; }
.f2 { left: 325px; top: 439px; width: 1021px; height: 1052px; }
.f3 { left: 325px; top: 1481px; width: 1021px; height: 621px; }
.f4 { left: 1336px; top: 436px; width: 1720px; height: 1666px; border-top-width: 13px; }
.f5 { left: 325px; top: 2092px; width: 3409px; height: 79px; }
.f6 { left: 325px; top: 2092px; width: 522px; height: 79px; }
.f7 { left: 3046px; top: 439px; width: 688px; height: 1663px; }
.leader { position: absolute; left: 221px; top: 2024px; width: 170px; height: 120px; }
.dot { position: absolute; width: 229px; height: 229px; border-radius: 50%; background: #000; color: #fff; font: 600 144px/218px "Open Sans", sans-serif; letter-spacing: 0; text-align: center; -webkit-text-stroke: 1.500px currentColor; }
.n1 { left: 3270px; top: 138px; }
.n2 { left: 1038px; top: 642px; }
.n3 { left: 968px; top: 1694px; }
.n4 { left: 2383px; top: 556px; color: #aad3df; }
.n5 { left: 1326px; top: 2109px; }
.n6 { left: 30px; top: 1839px; }
.n7 { left: 3339px; top: 1668px; }
```
FILE: relief.js
```js
// Grows branching valleys and ridges for the elevation raster.
let seed = 20;
const rnd = () => (seed = (seed * 16807) % 2147483647) / 2147483647;
const NS = "http://www.w3.org/2000/svg";

function twig(out, x, y, a, len, level) {
  let d = `M${x.toFixed(1)} ${y.toFixed(1)}`;
  const steps = Math.ceil(len / 2.5);
  for (let i = 0; i < steps; i++) {
    a += (rnd() - 0.5) * 0.7;
    x += Math.cos(a) * 2.5;
    y += Math.sin(a) * 2.5;
    d += `L${x.toFixed(1)} ${y.toFixed(1)}`;
    if (level < 3 && rnd() < 0.7) {
      twig(out, x, y, a + (rnd() < 0.5 ? 0.85 : -0.85), len * (0.3 + rnd() * 0.35), level + 1);
    }
  }
  out[level] += d;
}

function grow(lines, reach) {
  const out = ["", "", "", ""];
  for (const pts of lines) {
    out[0] += "M" + pts.map(p => p.join(" ")).join("L");
    for (let i = 1; i < pts.length; i++) {
      const [x0, y0] = pts[i - 1], [x1, y1] = pts[i];
      const len = Math.hypot(x1 - x0, y1 - y0), a = Math.atan2(y1 - y0, x1 - x0);
      for (let t = 2; t < len; t += 4.5) {
        const side = rnd() < 0.5 ? 1 : -1;
        twig(out, x0 + (x1 - x0) * t / len, y0 + (y1 - y0) * t / len, a + side * (0.6 + rnd() * 0.4), reach * (0.4 + rnd()), 1);
      }
    }
  }
  return out;
}

function draw(id, out, widths, opacities) {
  out.forEach((d, i) => {
    const p = document.createElementNS(NS, "path");
    p.setAttribute("d", d || "M0 0");
    p.setAttribute("stroke-width", widths[i]);
    p.setAttribute("stroke-opacity", opacities[i]);
    document.getElementById(id).append(p);
  });
}

const valleys = grow([
  [[798, 404], [794, 425], [800, 440]],
  [[822, 404], [818, 430], [804, 455], [794, 470]],
  [[850, 404], [848, 425], [838, 450], [842, 470]],
  [[880, 404], [874, 440], [880, 480], [872, 525]],
  [[908, 404], [904, 430], [910, 455]],
  [[938, 404], [931, 440], [938, 480], [930, 520]],
  [[972, 404], [968, 430], [976, 460]],
  [[1003, 404], [1006, 440], [998, 480], [1004, 505]],
  [[1042, 404], [1037, 440], [1042, 490]],
  [[776, 482], [800, 496], [838, 515]],
  [[776, 530], [800, 532], [824, 542]],
  [[776, 592], [806, 572], [836, 555]],
  [[776, 628], [826, 614], [852, 604]],
  [[776, 655], [820, 646], [866, 642]],
  [[1066, 662], [1040, 644], [1012, 632], [998, 600], [985, 565]],
  [[1014, 632], [1010, 600], [1022, 570]],
  [[1066, 620], [1040, 590], [1026, 560]],
  [[1066, 530], [1036, 528], [1010, 538]],
  [[960, 664], [966, 640], [962, 615]]
], 20);
const ridges = grow([
  [[850, 515], [880, 535], [905, 544], [935, 552], [975, 545], [1005, 530]],
  [[905, 544], [900, 575], [890, 600]],
  [[935, 552], [945, 580], [975, 590]],
  [[905, 515], [905, 544]]
], 16);
draw("low", valleys, [4, 2.2, 1.4, 1], [0.5, 0.34, 0.26, 0.2]);
draw("high", ridges, [4, 2.2, 1.4, 1], [0.4, 0.26, 0.22, 0.16]);
draw("veins", valleys, [1.3, 0.8, 0.5, 0.4], [1, 0.6, 0.5, 0.4]);
```
